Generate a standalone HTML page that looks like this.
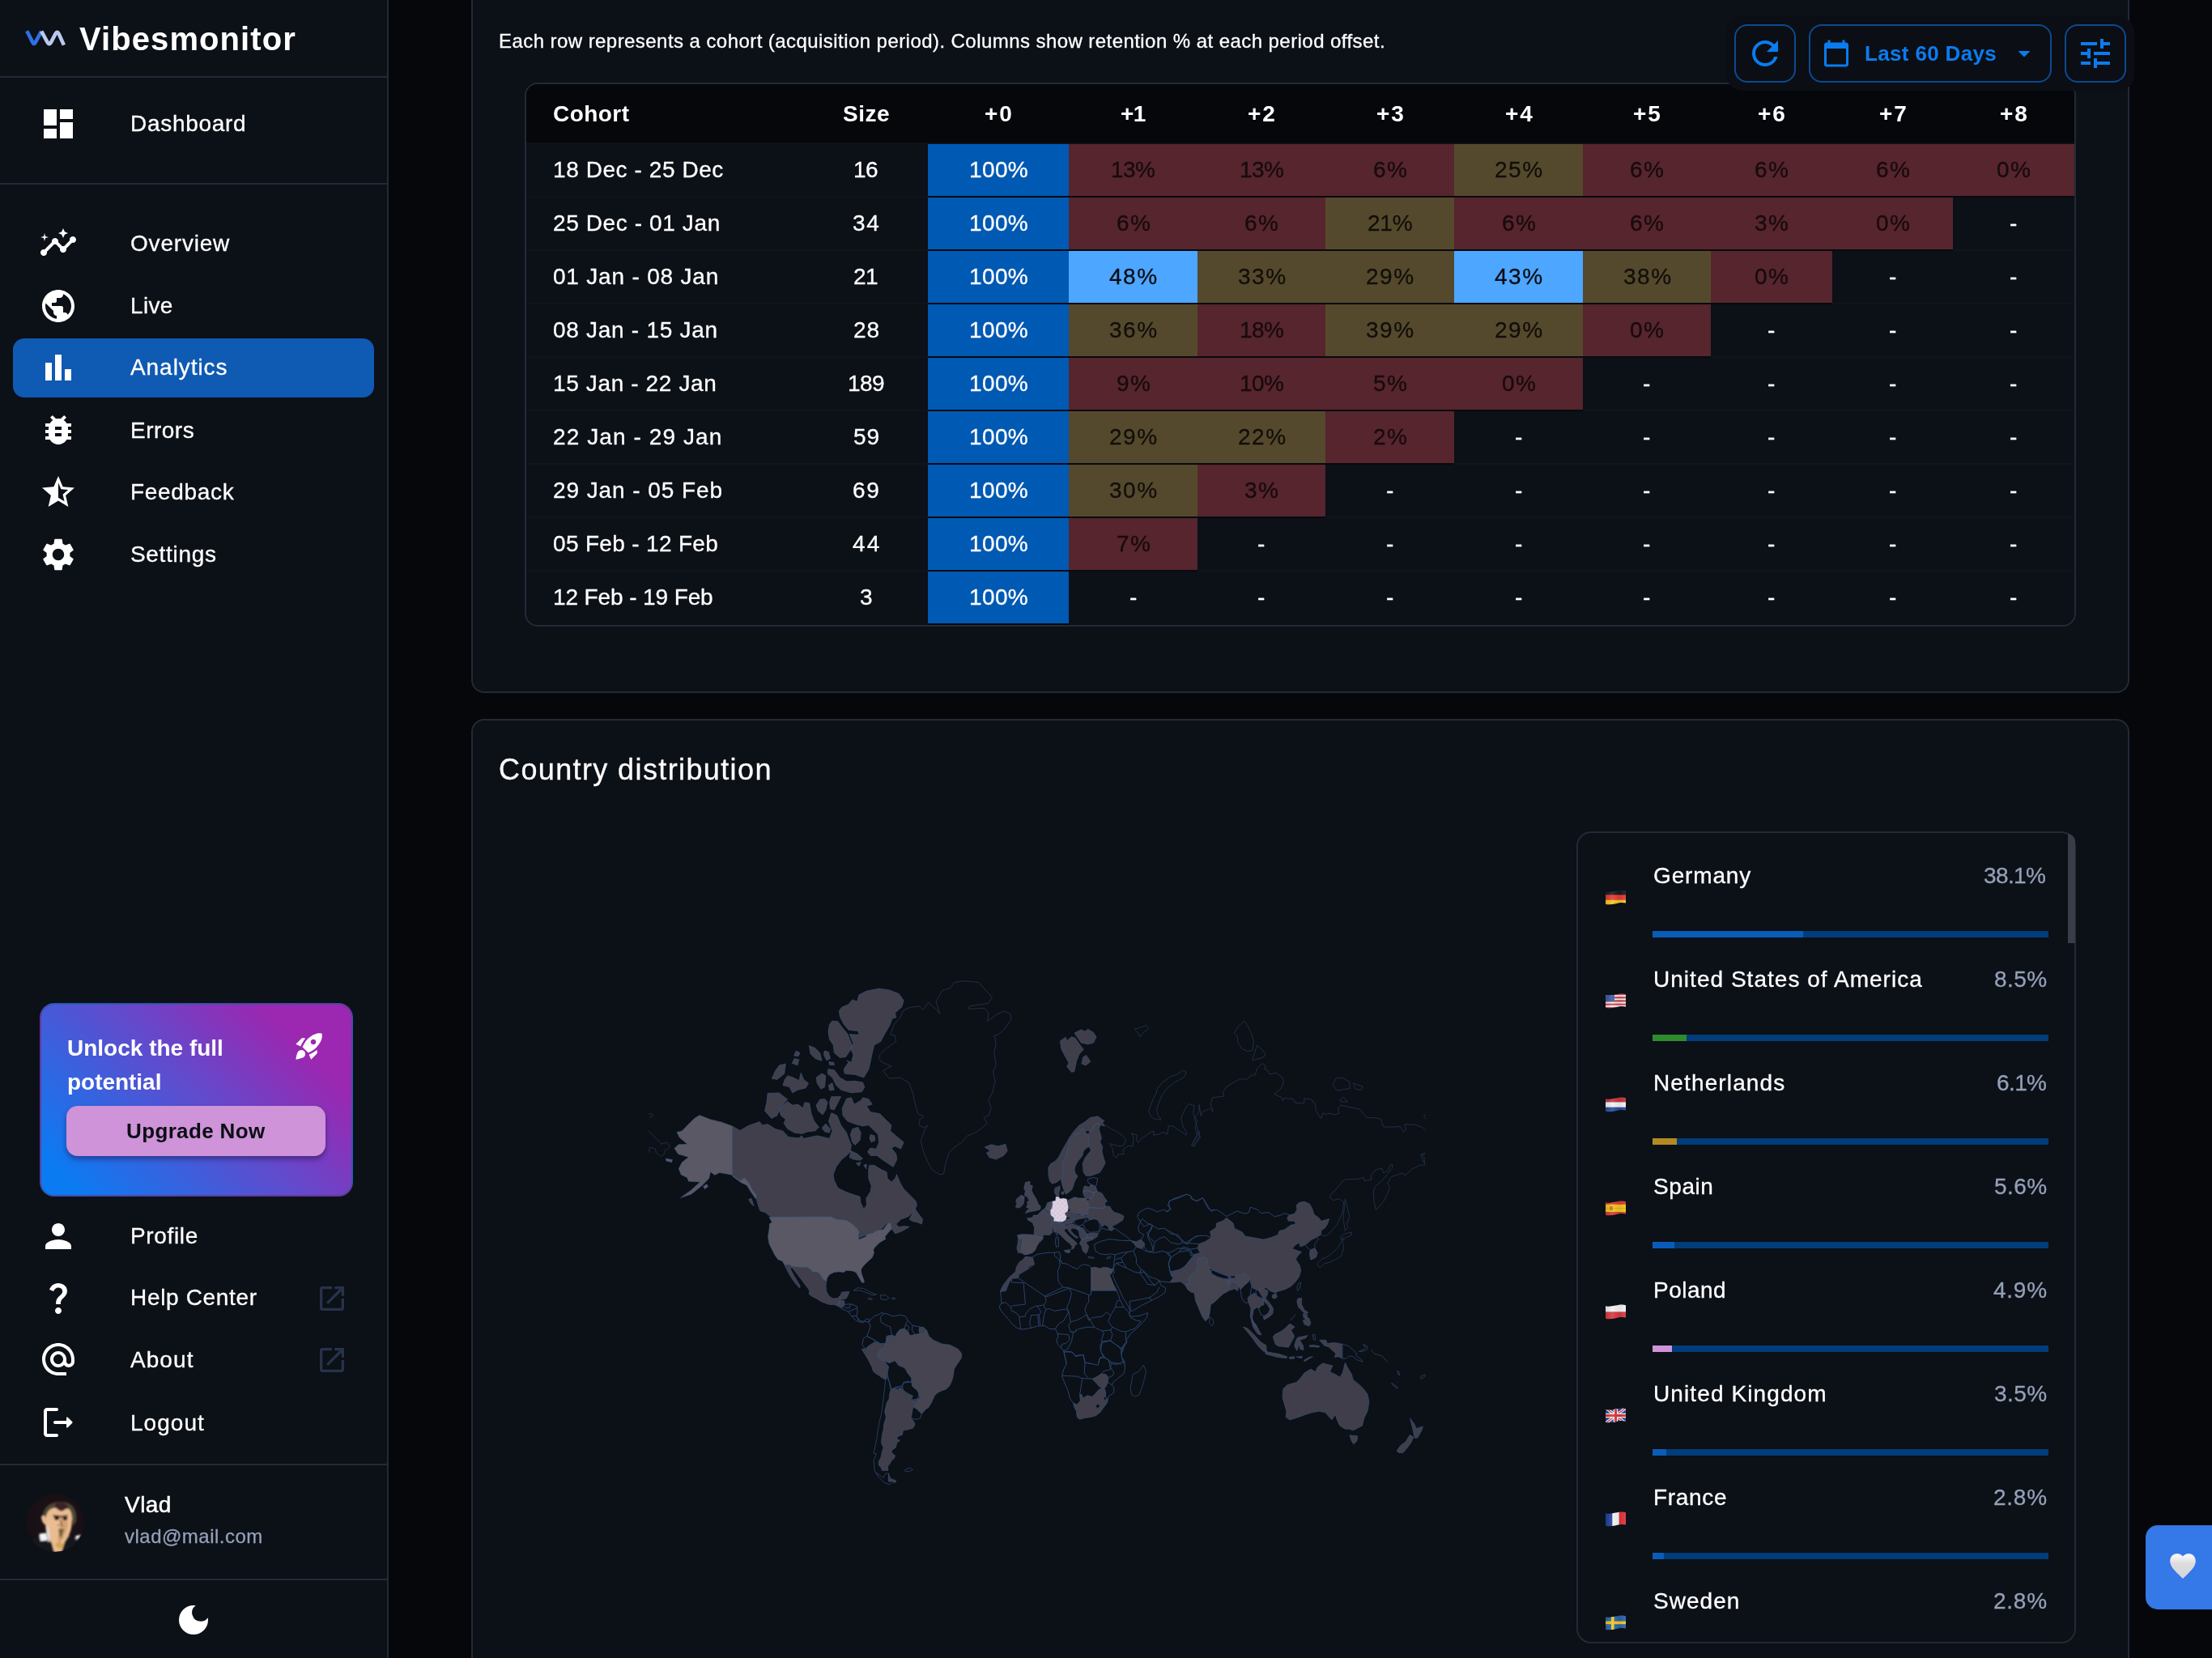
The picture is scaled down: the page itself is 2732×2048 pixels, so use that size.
<!DOCTYPE html>
<html><head><meta charset="utf-8"><title>Vibesmonitor</title>
<style>
html,body{margin:0;padding:0;background:#05070a;}
body{width:2732px;height:2048px;position:relative;overflow:hidden;font-family:"Liberation Sans",sans-serif;}
.b,.t,.ic{position:absolute;}
.t{white-space:nowrap;will-change:transform;}
</style></head><body>
<svg width="0" height="0" style="position:absolute"><defs><linearGradient id="fsh" x1="0" x2="1" y1="0" y2="0"><stop offset="0" stop-color="#000" stop-opacity=".12"/><stop offset=".35" stop-color="#fff" stop-opacity=".10"/><stop offset=".7" stop-color="#000" stop-opacity=".06"/><stop offset="1" stop-color="#fff" stop-opacity=".08"/></linearGradient></defs></svg>
<div class="b" style="left:582px;top:-40px;width:2048px;height:896px;background:#0c1017;border:2px solid #222a38;border-radius:16px;box-sizing:border-box;"></div>
<div class="b" style="left:582px;top:888px;width:2048px;height:1300px;background:#0c1017;border:2px solid #222a38;border-radius:16px;box-sizing:border-box;"></div>
<div class="t" style="left:616.00px;top:39.08px;font-size:24px;line-height:24px;color:#fff;letter-spacing:0.438px;-webkit-text-stroke-width:0.3px;">Each row represents a cohort (acquisition period). Columns show retention % at each period offset.</div>
<div class="b" style="left:648px;top:102px;width:1916px;height:672px;border:2px solid #222a38;border-radius:16px;box-sizing:border-box;overflow:hidden;"></div>
<div class="b" style="left:650px;top:104px;width:1912px;height:72px;background:#05070a;border-radius:14px 14px 0 0;"></div>
<div class="t" style="left:682.50px;top:126.80px;font-size:28px;line-height:28px;color:#fff;font-weight:700;letter-spacing:0.450px;">Cohort</div>
<div class="t" style="left:1041.05px;top:126.80px;font-size:28px;line-height:28px;color:#fff;font-weight:700;letter-spacing:0.500px;">Size</div>
<div class="t" style="left:1216.00px;top:126.80px;font-size:28px;line-height:28px;color:#fff;font-weight:700;letter-spacing:2.000px;">+0</div>
<div class="t" style="left:1383.80px;top:126.80px;font-size:28px;line-height:28px;color:#fff;font-weight:700;letter-spacing:-0.600px;">+1</div>
<div class="t" style="left:1541.00px;top:126.80px;font-size:28px;line-height:28px;color:#fff;font-weight:700;letter-spacing:2.000px;">+2</div>
<div class="t" style="left:1699.50px;top:126.80px;font-size:28px;line-height:28px;color:#fff;font-weight:700;letter-spacing:2.000px;">+3</div>
<div class="t" style="left:1858.50px;top:126.80px;font-size:28px;line-height:28px;color:#fff;font-weight:700;letter-spacing:2.000px;">+4</div>
<div class="t" style="left:2017.00px;top:126.80px;font-size:28px;line-height:28px;color:#fff;font-weight:700;letter-spacing:2.000px;">+5</div>
<div class="t" style="left:2171.00px;top:126.80px;font-size:28px;line-height:28px;color:#fff;font-weight:700;letter-spacing:2.000px;">+6</div>
<div class="t" style="left:2320.50px;top:126.80px;font-size:28px;line-height:28px;color:#fff;font-weight:700;letter-spacing:2.000px;">+7</div>
<div class="t" style="left:2470.00px;top:126.80px;font-size:28px;line-height:28px;color:#fff;font-weight:700;letter-spacing:2.000px;">+8</div>
<div class="b" style="left:650px;top:242px;width:496px;height:2px;background:#10141c;"></div>
<div class="t" style="left:682.50px;top:196.40px;font-size:28px;line-height:28px;color:#fff;letter-spacing:0.575px;-webkit-text-stroke-width:0.3px;">18 Dec - 25 Dec</div>
<div class="t" style="left:1054.47px;top:196.40px;font-size:28px;line-height:28px;color:#fff;letter-spacing:-0.600px;-webkit-text-stroke-width:0.3px;">16</div>
<div class="b" style="left:1146px;top:178px;width:174px;height:64px;background:#0059b3;"></div>
<div class="b" style="left:1146px;top:242px;width:174px;height:2px;background:#080a0f;"></div>
<div class="t" style="left:1196.70px;top:196.40px;font-size:28px;line-height:28px;color:#fff;letter-spacing:0.367px;-webkit-text-stroke-width:0.3px;">100%</div>
<div class="b" style="left:1320px;top:178px;width:159px;height:64px;background:#56252d;"></div>
<div class="b" style="left:1320px;top:242px;width:159px;height:2px;background:#080a0f;"></div>
<div class="t" style="left:1372.10px;top:196.40px;font-size:28px;line-height:28px;color:#170b0d;letter-spacing:-0.600px;-webkit-text-stroke-width:0.3px;">13%</div>
<div class="b" style="left:1479px;top:178px;width:158px;height:64px;background:#56252d;"></div>
<div class="b" style="left:1479px;top:242px;width:158px;height:2px;background:#080a0f;"></div>
<div class="t" style="left:1530.60px;top:196.40px;font-size:28px;line-height:28px;color:#170b0d;letter-spacing:-0.600px;-webkit-text-stroke-width:0.3px;">13%</div>
<div class="b" style="left:1637px;top:178px;width:159px;height:64px;background:#56252d;"></div>
<div class="b" style="left:1637px;top:242px;width:159px;height:2px;background:#080a0f;"></div>
<div class="t" style="left:1695.50px;top:196.40px;font-size:28px;line-height:28px;color:#170b0d;letter-spacing:1.500px;-webkit-text-stroke-width:0.3px;">6%</div>
<div class="b" style="left:1796px;top:178px;width:159px;height:64px;background:#55492d;"></div>
<div class="b" style="left:1796px;top:242px;width:159px;height:2px;background:#080a0f;"></div>
<div class="t" style="left:1846.00px;top:196.40px;font-size:28px;line-height:28px;color:#120f0a;letter-spacing:1.500px;-webkit-text-stroke-width:0.3px;">25%</div>
<div class="b" style="left:1955px;top:178px;width:158px;height:64px;background:#56252d;"></div>
<div class="b" style="left:1955px;top:242px;width:158px;height:2px;background:#080a0f;"></div>
<div class="t" style="left:2013.00px;top:196.40px;font-size:28px;line-height:28px;color:#170b0d;letter-spacing:1.500px;-webkit-text-stroke-width:0.3px;">6%</div>
<div class="b" style="left:2113px;top:178px;width:150px;height:64px;background:#56252d;"></div>
<div class="b" style="left:2113px;top:242px;width:150px;height:2px;background:#080a0f;"></div>
<div class="t" style="left:2167.00px;top:196.40px;font-size:28px;line-height:28px;color:#170b0d;letter-spacing:1.500px;-webkit-text-stroke-width:0.3px;">6%</div>
<div class="b" style="left:2263px;top:178px;width:149px;height:64px;background:#56252d;"></div>
<div class="b" style="left:2263px;top:242px;width:149px;height:2px;background:#080a0f;"></div>
<div class="t" style="left:2316.50px;top:196.40px;font-size:28px;line-height:28px;color:#170b0d;letter-spacing:1.500px;-webkit-text-stroke-width:0.3px;">6%</div>
<div class="b" style="left:2412px;top:178px;width:150px;height:64px;background:#56252d;"></div>
<div class="b" style="left:2412px;top:242px;width:150px;height:2px;background:#080a0f;"></div>
<div class="t" style="left:2466.00px;top:196.40px;font-size:28px;line-height:28px;color:#170b0d;letter-spacing:1.500px;-webkit-text-stroke-width:0.3px;">0%</div>
<div class="b" style="left:650px;top:308px;width:496px;height:2px;background:#10141c;"></div>
<div class="t" style="left:682.50px;top:262.40px;font-size:28px;line-height:28px;color:#fff;letter-spacing:0.611px;-webkit-text-stroke-width:0.3px;">25 Dec - 01 Jan</div>
<div class="t" style="left:1053.30px;top:262.40px;font-size:28px;line-height:28px;color:#fff;letter-spacing:1.750px;-webkit-text-stroke-width:0.3px;">34</div>
<div class="b" style="left:1146px;top:244px;width:174px;height:64px;background:#0059b3;"></div>
<div class="b" style="left:1146px;top:308px;width:174px;height:2px;background:#080a0f;"></div>
<div class="t" style="left:1196.70px;top:262.40px;font-size:28px;line-height:28px;color:#fff;letter-spacing:0.367px;-webkit-text-stroke-width:0.3px;">100%</div>
<div class="b" style="left:1320px;top:244px;width:159px;height:64px;background:#56252d;"></div>
<div class="b" style="left:1320px;top:308px;width:159px;height:2px;background:#080a0f;"></div>
<div class="t" style="left:1378.50px;top:262.40px;font-size:28px;line-height:28px;color:#170b0d;letter-spacing:1.500px;-webkit-text-stroke-width:0.3px;">6%</div>
<div class="b" style="left:1479px;top:244px;width:158px;height:64px;background:#56252d;"></div>
<div class="b" style="left:1479px;top:308px;width:158px;height:2px;background:#080a0f;"></div>
<div class="t" style="left:1537.00px;top:262.40px;font-size:28px;line-height:28px;color:#170b0d;letter-spacing:1.500px;-webkit-text-stroke-width:0.3px;">6%</div>
<div class="b" style="left:1637px;top:244px;width:159px;height:64px;background:#55492d;"></div>
<div class="b" style="left:1637px;top:308px;width:159px;height:2px;background:#080a0f;"></div>
<div class="t" style="left:1688.75px;top:262.40px;font-size:28px;line-height:28px;color:#120f0a;letter-spacing:-0.250px;-webkit-text-stroke-width:0.3px;">21%</div>
<div class="b" style="left:1796px;top:244px;width:159px;height:64px;background:#56252d;"></div>
<div class="b" style="left:1796px;top:308px;width:159px;height:2px;background:#080a0f;"></div>
<div class="t" style="left:1854.50px;top:262.40px;font-size:28px;line-height:28px;color:#170b0d;letter-spacing:1.500px;-webkit-text-stroke-width:0.3px;">6%</div>
<div class="b" style="left:1955px;top:244px;width:158px;height:64px;background:#56252d;"></div>
<div class="b" style="left:1955px;top:308px;width:158px;height:2px;background:#080a0f;"></div>
<div class="t" style="left:2013.00px;top:262.40px;font-size:28px;line-height:28px;color:#170b0d;letter-spacing:1.500px;-webkit-text-stroke-width:0.3px;">6%</div>
<div class="b" style="left:2113px;top:244px;width:150px;height:64px;background:#56252d;"></div>
<div class="b" style="left:2113px;top:308px;width:150px;height:2px;background:#080a0f;"></div>
<div class="t" style="left:2167.00px;top:262.40px;font-size:28px;line-height:28px;color:#170b0d;letter-spacing:1.500px;-webkit-text-stroke-width:0.3px;">3%</div>
<div class="b" style="left:2263px;top:244px;width:149px;height:64px;background:#56252d;"></div>
<div class="b" style="left:2263px;top:308px;width:149px;height:2px;background:#080a0f;"></div>
<div class="t" style="left:2316.50px;top:262.40px;font-size:28px;line-height:28px;color:#170b0d;letter-spacing:1.500px;-webkit-text-stroke-width:0.3px;">0%</div>
<div class="b" style="left:2412px;top:308px;width:150px;height:2px;background:#10141c;"></div>
<div class="t" style="left:2482.38px;top:262.40px;font-size:28px;line-height:28px;color:#fff;-webkit-text-stroke-width:0.3px;">-</div>
<div class="b" style="left:650px;top:374px;width:496px;height:2px;background:#10141c;"></div>
<div class="t" style="left:682.50px;top:328.40px;font-size:28px;line-height:28px;color:#fff;letter-spacing:0.800px;-webkit-text-stroke-width:0.3px;">01 Jan - 08 Jan</div>
<div class="t" style="left:1054.47px;top:328.40px;font-size:28px;line-height:28px;color:#fff;letter-spacing:-0.600px;-webkit-text-stroke-width:0.3px;">21</div>
<div class="b" style="left:1146px;top:310px;width:174px;height:64px;background:#0059b3;"></div>
<div class="b" style="left:1146px;top:374px;width:174px;height:2px;background:#080a0f;"></div>
<div class="t" style="left:1196.70px;top:328.40px;font-size:28px;line-height:28px;color:#fff;letter-spacing:0.367px;-webkit-text-stroke-width:0.3px;">100%</div>
<div class="b" style="left:1320px;top:310px;width:159px;height:64px;background:#4da6ff;"></div>
<div class="b" style="left:1320px;top:374px;width:159px;height:2px;background:#080a0f;"></div>
<div class="t" style="left:1370.00px;top:328.40px;font-size:28px;line-height:28px;color:#0b0d12;letter-spacing:1.500px;-webkit-text-stroke-width:0.3px;">48%</div>
<div class="b" style="left:1479px;top:310px;width:158px;height:64px;background:#55492d;"></div>
<div class="b" style="left:1479px;top:374px;width:158px;height:2px;background:#080a0f;"></div>
<div class="t" style="left:1528.50px;top:328.40px;font-size:28px;line-height:28px;color:#120f0a;letter-spacing:1.500px;-webkit-text-stroke-width:0.3px;">33%</div>
<div class="b" style="left:1637px;top:310px;width:159px;height:64px;background:#55492d;"></div>
<div class="b" style="left:1637px;top:374px;width:159px;height:2px;background:#080a0f;"></div>
<div class="t" style="left:1687.00px;top:328.40px;font-size:28px;line-height:28px;color:#120f0a;letter-spacing:1.500px;-webkit-text-stroke-width:0.3px;">29%</div>
<div class="b" style="left:1796px;top:310px;width:159px;height:64px;background:#4da6ff;"></div>
<div class="b" style="left:1796px;top:374px;width:159px;height:2px;background:#080a0f;"></div>
<div class="t" style="left:1846.00px;top:328.40px;font-size:28px;line-height:28px;color:#0b0d12;letter-spacing:1.500px;-webkit-text-stroke-width:0.3px;">43%</div>
<div class="b" style="left:1955px;top:310px;width:158px;height:64px;background:#55492d;"></div>
<div class="b" style="left:1955px;top:374px;width:158px;height:2px;background:#080a0f;"></div>
<div class="t" style="left:2004.50px;top:328.40px;font-size:28px;line-height:28px;color:#120f0a;letter-spacing:1.500px;-webkit-text-stroke-width:0.3px;">38%</div>
<div class="b" style="left:2113px;top:310px;width:150px;height:64px;background:#56252d;"></div>
<div class="b" style="left:2113px;top:374px;width:150px;height:2px;background:#080a0f;"></div>
<div class="t" style="left:2167.00px;top:328.40px;font-size:28px;line-height:28px;color:#170b0d;letter-spacing:1.500px;-webkit-text-stroke-width:0.3px;">0%</div>
<div class="b" style="left:2263px;top:374px;width:149px;height:2px;background:#10141c;"></div>
<div class="t" style="left:2332.88px;top:328.40px;font-size:28px;line-height:28px;color:#fff;-webkit-text-stroke-width:0.3px;">-</div>
<div class="b" style="left:2412px;top:374px;width:150px;height:2px;background:#10141c;"></div>
<div class="t" style="left:2482.38px;top:328.40px;font-size:28px;line-height:28px;color:#fff;-webkit-text-stroke-width:0.3px;">-</div>
<div class="b" style="left:650px;top:440px;width:496px;height:2px;background:#10141c;"></div>
<div class="t" style="left:682.50px;top:394.40px;font-size:28px;line-height:28px;color:#fff;letter-spacing:0.714px;-webkit-text-stroke-width:0.3px;">08 Jan - 15 Jan</div>
<div class="t" style="left:1053.75px;top:394.40px;font-size:28px;line-height:28px;color:#fff;letter-spacing:0.850px;-webkit-text-stroke-width:0.3px;">28</div>
<div class="b" style="left:1146px;top:376px;width:174px;height:64px;background:#0059b3;"></div>
<div class="b" style="left:1146px;top:440px;width:174px;height:2px;background:#080a0f;"></div>
<div class="t" style="left:1196.70px;top:394.40px;font-size:28px;line-height:28px;color:#fff;letter-spacing:0.367px;-webkit-text-stroke-width:0.3px;">100%</div>
<div class="b" style="left:1320px;top:376px;width:159px;height:64px;background:#55492d;"></div>
<div class="b" style="left:1320px;top:440px;width:159px;height:2px;background:#080a0f;"></div>
<div class="t" style="left:1370.00px;top:394.40px;font-size:28px;line-height:28px;color:#120f0a;letter-spacing:1.500px;-webkit-text-stroke-width:0.3px;">36%</div>
<div class="b" style="left:1479px;top:376px;width:158px;height:64px;background:#56252d;"></div>
<div class="b" style="left:1479px;top:440px;width:158px;height:2px;background:#080a0f;"></div>
<div class="t" style="left:1530.60px;top:394.40px;font-size:28px;line-height:28px;color:#170b0d;letter-spacing:-0.600px;-webkit-text-stroke-width:0.3px;">18%</div>
<div class="b" style="left:1637px;top:376px;width:159px;height:64px;background:#55492d;"></div>
<div class="b" style="left:1637px;top:440px;width:159px;height:2px;background:#080a0f;"></div>
<div class="t" style="left:1687.00px;top:394.40px;font-size:28px;line-height:28px;color:#120f0a;letter-spacing:1.500px;-webkit-text-stroke-width:0.3px;">39%</div>
<div class="b" style="left:1796px;top:376px;width:159px;height:64px;background:#55492d;"></div>
<div class="b" style="left:1796px;top:440px;width:159px;height:2px;background:#080a0f;"></div>
<div class="t" style="left:1846.00px;top:394.40px;font-size:28px;line-height:28px;color:#120f0a;letter-spacing:1.500px;-webkit-text-stroke-width:0.3px;">29%</div>
<div class="b" style="left:1955px;top:376px;width:158px;height:64px;background:#56252d;"></div>
<div class="b" style="left:1955px;top:440px;width:158px;height:2px;background:#080a0f;"></div>
<div class="t" style="left:2013.00px;top:394.40px;font-size:28px;line-height:28px;color:#170b0d;letter-spacing:1.500px;-webkit-text-stroke-width:0.3px;">0%</div>
<div class="b" style="left:2113px;top:440px;width:150px;height:2px;background:#10141c;"></div>
<div class="t" style="left:2183.38px;top:394.40px;font-size:28px;line-height:28px;color:#fff;-webkit-text-stroke-width:0.3px;">-</div>
<div class="b" style="left:2263px;top:440px;width:149px;height:2px;background:#10141c;"></div>
<div class="t" style="left:2332.88px;top:394.40px;font-size:28px;line-height:28px;color:#fff;-webkit-text-stroke-width:0.3px;">-</div>
<div class="b" style="left:2412px;top:440px;width:150px;height:2px;background:#10141c;"></div>
<div class="t" style="left:2482.38px;top:394.40px;font-size:28px;line-height:28px;color:#fff;-webkit-text-stroke-width:0.3px;">-</div>
<div class="b" style="left:650px;top:506px;width:496px;height:2px;background:#10141c;"></div>
<div class="t" style="left:682.50px;top:460.40px;font-size:28px;line-height:28px;color:#fff;letter-spacing:0.629px;-webkit-text-stroke-width:0.3px;">15 Jan - 22 Jan</div>
<div class="t" style="left:1047.02px;top:460.40px;font-size:28px;line-height:28px;color:#fff;letter-spacing:-0.600px;-webkit-text-stroke-width:0.3px;">189</div>
<div class="b" style="left:1146px;top:442px;width:174px;height:64px;background:#0059b3;"></div>
<div class="b" style="left:1146px;top:506px;width:174px;height:2px;background:#080a0f;"></div>
<div class="t" style="left:1196.70px;top:460.40px;font-size:28px;line-height:28px;color:#fff;letter-spacing:0.367px;-webkit-text-stroke-width:0.3px;">100%</div>
<div class="b" style="left:1320px;top:442px;width:159px;height:64px;background:#56252d;"></div>
<div class="b" style="left:1320px;top:506px;width:159px;height:2px;background:#080a0f;"></div>
<div class="t" style="left:1378.50px;top:460.40px;font-size:28px;line-height:28px;color:#170b0d;letter-spacing:1.500px;-webkit-text-stroke-width:0.3px;">9%</div>
<div class="b" style="left:1479px;top:442px;width:158px;height:64px;background:#56252d;"></div>
<div class="b" style="left:1479px;top:506px;width:158px;height:2px;background:#080a0f;"></div>
<div class="t" style="left:1530.60px;top:460.40px;font-size:28px;line-height:28px;color:#170b0d;letter-spacing:-0.600px;-webkit-text-stroke-width:0.3px;">10%</div>
<div class="b" style="left:1637px;top:442px;width:159px;height:64px;background:#56252d;"></div>
<div class="b" style="left:1637px;top:506px;width:159px;height:2px;background:#080a0f;"></div>
<div class="t" style="left:1695.50px;top:460.40px;font-size:28px;line-height:28px;color:#170b0d;letter-spacing:1.500px;-webkit-text-stroke-width:0.3px;">5%</div>
<div class="b" style="left:1796px;top:442px;width:159px;height:64px;background:#56252d;"></div>
<div class="b" style="left:1796px;top:506px;width:159px;height:2px;background:#080a0f;"></div>
<div class="t" style="left:1854.50px;top:460.40px;font-size:28px;line-height:28px;color:#170b0d;letter-spacing:1.500px;-webkit-text-stroke-width:0.3px;">0%</div>
<div class="b" style="left:1955px;top:506px;width:158px;height:2px;background:#10141c;"></div>
<div class="t" style="left:2029.38px;top:460.40px;font-size:28px;line-height:28px;color:#fff;-webkit-text-stroke-width:0.3px;">-</div>
<div class="b" style="left:2113px;top:506px;width:150px;height:2px;background:#10141c;"></div>
<div class="t" style="left:2183.38px;top:460.40px;font-size:28px;line-height:28px;color:#fff;-webkit-text-stroke-width:0.3px;">-</div>
<div class="b" style="left:2263px;top:506px;width:149px;height:2px;background:#10141c;"></div>
<div class="t" style="left:2332.88px;top:460.40px;font-size:28px;line-height:28px;color:#fff;-webkit-text-stroke-width:0.3px;">-</div>
<div class="b" style="left:2412px;top:506px;width:150px;height:2px;background:#10141c;"></div>
<div class="t" style="left:2482.38px;top:460.40px;font-size:28px;line-height:28px;color:#fff;-webkit-text-stroke-width:0.3px;">-</div>
<div class="b" style="left:650px;top:572px;width:496px;height:2px;background:#10141c;"></div>
<div class="t" style="left:682.50px;top:526.40px;font-size:28px;line-height:28px;color:#fff;letter-spacing:1.093px;-webkit-text-stroke-width:0.3px;">22 Jan - 29 Jan</div>
<div class="t" style="left:1053.75px;top:526.40px;font-size:28px;line-height:28px;color:#fff;letter-spacing:0.850px;-webkit-text-stroke-width:0.3px;">59</div>
<div class="b" style="left:1146px;top:508px;width:174px;height:64px;background:#0059b3;"></div>
<div class="b" style="left:1146px;top:572px;width:174px;height:2px;background:#080a0f;"></div>
<div class="t" style="left:1196.70px;top:526.40px;font-size:28px;line-height:28px;color:#fff;letter-spacing:0.367px;-webkit-text-stroke-width:0.3px;">100%</div>
<div class="b" style="left:1320px;top:508px;width:159px;height:64px;background:#55492d;"></div>
<div class="b" style="left:1320px;top:572px;width:159px;height:2px;background:#080a0f;"></div>
<div class="t" style="left:1370.00px;top:526.40px;font-size:28px;line-height:28px;color:#120f0a;letter-spacing:1.500px;-webkit-text-stroke-width:0.3px;">29%</div>
<div class="b" style="left:1479px;top:508px;width:158px;height:64px;background:#55492d;"></div>
<div class="b" style="left:1479px;top:572px;width:158px;height:2px;background:#080a0f;"></div>
<div class="t" style="left:1528.50px;top:526.40px;font-size:28px;line-height:28px;color:#120f0a;letter-spacing:1.500px;-webkit-text-stroke-width:0.3px;">22%</div>
<div class="b" style="left:1637px;top:508px;width:159px;height:64px;background:#56252d;"></div>
<div class="b" style="left:1637px;top:572px;width:159px;height:2px;background:#080a0f;"></div>
<div class="t" style="left:1695.50px;top:526.40px;font-size:28px;line-height:28px;color:#170b0d;letter-spacing:1.500px;-webkit-text-stroke-width:0.3px;">2%</div>
<div class="b" style="left:1796px;top:572px;width:159px;height:2px;background:#10141c;"></div>
<div class="t" style="left:1870.88px;top:526.40px;font-size:28px;line-height:28px;color:#fff;-webkit-text-stroke-width:0.3px;">-</div>
<div class="b" style="left:1955px;top:572px;width:158px;height:2px;background:#10141c;"></div>
<div class="t" style="left:2029.38px;top:526.40px;font-size:28px;line-height:28px;color:#fff;-webkit-text-stroke-width:0.3px;">-</div>
<div class="b" style="left:2113px;top:572px;width:150px;height:2px;background:#10141c;"></div>
<div class="t" style="left:2183.38px;top:526.40px;font-size:28px;line-height:28px;color:#fff;-webkit-text-stroke-width:0.3px;">-</div>
<div class="b" style="left:2263px;top:572px;width:149px;height:2px;background:#10141c;"></div>
<div class="t" style="left:2332.88px;top:526.40px;font-size:28px;line-height:28px;color:#fff;-webkit-text-stroke-width:0.3px;">-</div>
<div class="b" style="left:2412px;top:572px;width:150px;height:2px;background:#10141c;"></div>
<div class="t" style="left:2482.38px;top:526.40px;font-size:28px;line-height:28px;color:#fff;-webkit-text-stroke-width:0.3px;">-</div>
<div class="b" style="left:650px;top:638px;width:496px;height:2px;background:#10141c;"></div>
<div class="t" style="left:682.50px;top:592.40px;font-size:28px;line-height:28px;color:#fff;letter-spacing:0.918px;-webkit-text-stroke-width:0.3px;">29 Jan - 05 Feb</div>
<div class="t" style="left:1053.30px;top:592.40px;font-size:28px;line-height:28px;color:#fff;letter-spacing:1.750px;-webkit-text-stroke-width:0.3px;">69</div>
<div class="b" style="left:1146px;top:574px;width:174px;height:64px;background:#0059b3;"></div>
<div class="b" style="left:1146px;top:638px;width:174px;height:2px;background:#080a0f;"></div>
<div class="t" style="left:1196.70px;top:592.40px;font-size:28px;line-height:28px;color:#fff;letter-spacing:0.367px;-webkit-text-stroke-width:0.3px;">100%</div>
<div class="b" style="left:1320px;top:574px;width:159px;height:64px;background:#55492d;"></div>
<div class="b" style="left:1320px;top:638px;width:159px;height:2px;background:#080a0f;"></div>
<div class="t" style="left:1370.00px;top:592.40px;font-size:28px;line-height:28px;color:#120f0a;letter-spacing:1.500px;-webkit-text-stroke-width:0.3px;">30%</div>
<div class="b" style="left:1479px;top:574px;width:158px;height:64px;background:#56252d;"></div>
<div class="b" style="left:1479px;top:638px;width:158px;height:2px;background:#080a0f;"></div>
<div class="t" style="left:1537.00px;top:592.40px;font-size:28px;line-height:28px;color:#170b0d;letter-spacing:1.500px;-webkit-text-stroke-width:0.3px;">3%</div>
<div class="b" style="left:1637px;top:638px;width:159px;height:2px;background:#10141c;"></div>
<div class="t" style="left:1711.88px;top:592.40px;font-size:28px;line-height:28px;color:#fff;-webkit-text-stroke-width:0.3px;">-</div>
<div class="b" style="left:1796px;top:638px;width:159px;height:2px;background:#10141c;"></div>
<div class="t" style="left:1870.88px;top:592.40px;font-size:28px;line-height:28px;color:#fff;-webkit-text-stroke-width:0.3px;">-</div>
<div class="b" style="left:1955px;top:638px;width:158px;height:2px;background:#10141c;"></div>
<div class="t" style="left:2029.38px;top:592.40px;font-size:28px;line-height:28px;color:#fff;-webkit-text-stroke-width:0.3px;">-</div>
<div class="b" style="left:2113px;top:638px;width:150px;height:2px;background:#10141c;"></div>
<div class="t" style="left:2183.38px;top:592.40px;font-size:28px;line-height:28px;color:#fff;-webkit-text-stroke-width:0.3px;">-</div>
<div class="b" style="left:2263px;top:638px;width:149px;height:2px;background:#10141c;"></div>
<div class="t" style="left:2332.88px;top:592.40px;font-size:28px;line-height:28px;color:#fff;-webkit-text-stroke-width:0.3px;">-</div>
<div class="b" style="left:2412px;top:638px;width:150px;height:2px;background:#10141c;"></div>
<div class="t" style="left:2482.38px;top:592.40px;font-size:28px;line-height:28px;color:#fff;-webkit-text-stroke-width:0.3px;">-</div>
<div class="b" style="left:650px;top:704px;width:496px;height:2px;background:#10141c;"></div>
<div class="t" style="left:682.50px;top:658.40px;font-size:28px;line-height:28px;color:#fff;letter-spacing:0.325px;-webkit-text-stroke-width:0.3px;">05 Feb - 12 Feb</div>
<div class="t" style="left:1053.05px;top:658.40px;font-size:28px;line-height:28px;color:#fff;letter-spacing:2.250px;-webkit-text-stroke-width:0.3px;">44</div>
<div class="b" style="left:1146px;top:640px;width:174px;height:64px;background:#0059b3;"></div>
<div class="b" style="left:1146px;top:704px;width:174px;height:2px;background:#080a0f;"></div>
<div class="t" style="left:1196.70px;top:658.40px;font-size:28px;line-height:28px;color:#fff;letter-spacing:0.367px;-webkit-text-stroke-width:0.3px;">100%</div>
<div class="b" style="left:1320px;top:640px;width:159px;height:64px;background:#56252d;"></div>
<div class="b" style="left:1320px;top:704px;width:159px;height:2px;background:#080a0f;"></div>
<div class="t" style="left:1378.50px;top:658.40px;font-size:28px;line-height:28px;color:#170b0d;letter-spacing:1.500px;-webkit-text-stroke-width:0.3px;">7%</div>
<div class="b" style="left:1479px;top:704px;width:158px;height:2px;background:#10141c;"></div>
<div class="t" style="left:1553.38px;top:658.40px;font-size:28px;line-height:28px;color:#fff;-webkit-text-stroke-width:0.3px;">-</div>
<div class="b" style="left:1637px;top:704px;width:159px;height:2px;background:#10141c;"></div>
<div class="t" style="left:1711.88px;top:658.40px;font-size:28px;line-height:28px;color:#fff;-webkit-text-stroke-width:0.3px;">-</div>
<div class="b" style="left:1796px;top:704px;width:159px;height:2px;background:#10141c;"></div>
<div class="t" style="left:1870.88px;top:658.40px;font-size:28px;line-height:28px;color:#fff;-webkit-text-stroke-width:0.3px;">-</div>
<div class="b" style="left:1955px;top:704px;width:158px;height:2px;background:#10141c;"></div>
<div class="t" style="left:2029.38px;top:658.40px;font-size:28px;line-height:28px;color:#fff;-webkit-text-stroke-width:0.3px;">-</div>
<div class="b" style="left:2113px;top:704px;width:150px;height:2px;background:#10141c;"></div>
<div class="t" style="left:2183.38px;top:658.40px;font-size:28px;line-height:28px;color:#fff;-webkit-text-stroke-width:0.3px;">-</div>
<div class="b" style="left:2263px;top:704px;width:149px;height:2px;background:#10141c;"></div>
<div class="t" style="left:2332.88px;top:658.40px;font-size:28px;line-height:28px;color:#fff;-webkit-text-stroke-width:0.3px;">-</div>
<div class="b" style="left:2412px;top:704px;width:150px;height:2px;background:#10141c;"></div>
<div class="t" style="left:2482.38px;top:658.40px;font-size:28px;line-height:28px;color:#fff;-webkit-text-stroke-width:0.3px;">-</div>
<div class="t" style="left:682.50px;top:724.40px;font-size:28px;line-height:28px;color:#fff;letter-spacing:-0.111px;-webkit-text-stroke-width:0.3px;">12 Feb - 19 Feb</div>
<div class="t" style="left:1062.05px;top:724.40px;font-size:28px;line-height:28px;color:#fff;-webkit-text-stroke-width:0.3px;">3</div>
<div class="b" style="left:1146px;top:706px;width:174px;height:64px;background:#0059b3;"></div>
<div class="b" style="left:1146px;top:770px;width:174px;height:2px;background:#080a0f;"></div>
<div class="t" style="left:1196.70px;top:724.40px;font-size:28px;line-height:28px;color:#fff;letter-spacing:0.367px;-webkit-text-stroke-width:0.3px;">100%</div>
<div class="t" style="left:1394.88px;top:724.40px;font-size:28px;line-height:28px;color:#fff;-webkit-text-stroke-width:0.3px;">-</div>
<div class="t" style="left:1553.38px;top:724.40px;font-size:28px;line-height:28px;color:#fff;-webkit-text-stroke-width:0.3px;">-</div>
<div class="t" style="left:1711.88px;top:724.40px;font-size:28px;line-height:28px;color:#fff;-webkit-text-stroke-width:0.3px;">-</div>
<div class="t" style="left:1870.88px;top:724.40px;font-size:28px;line-height:28px;color:#fff;-webkit-text-stroke-width:0.3px;">-</div>
<div class="t" style="left:2029.38px;top:724.40px;font-size:28px;line-height:28px;color:#fff;-webkit-text-stroke-width:0.3px;">-</div>
<div class="t" style="left:2183.38px;top:724.40px;font-size:28px;line-height:28px;color:#fff;-webkit-text-stroke-width:0.3px;">-</div>
<div class="t" style="left:2332.88px;top:724.40px;font-size:28px;line-height:28px;color:#fff;-webkit-text-stroke-width:0.3px;">-</div>
<div class="t" style="left:2482.38px;top:724.40px;font-size:28px;line-height:28px;color:#fff;-webkit-text-stroke-width:0.3px;">-</div>
<div class="b" style="left:2132px;top:20px;width:504px;height:92px;background:#0b0e14;border-radius:20px;"></div>
<div class="b" style="left:2142px;top:30px;width:76px;height:72px;border:2px solid #0c4a8f;border-radius:16px;box-sizing:border-box;background:#0b0e14;"></div>
<div class="b" style="left:2234px;top:30px;width:300px;height:72px;border:2px solid #0c4a8f;border-radius:16px;box-sizing:border-box;background:#0b0e14;"></div>
<div class="b" style="left:2550px;top:30px;width:76px;height:72px;border:2px solid #0c4a8f;border-radius:16px;box-sizing:border-box;background:#0b0e14;"></div>
<svg class="ic" style="left:2156px;top:42px;width:48px;height:48px;fill:#0a7cf0;" viewBox="0 0 24 24"><path d="M17.65 6.35A7.958 7.958 0 0 0 12 4c-4.42 0-7.99 3.58-7.99 8s3.57 8 7.99 8c3.73 0 6.84-2.55 7.73-6h-2.08A5.99 5.99 0 0 1 12 18c-3.31 0-6-2.69-6-6s2.69-6 6-6c1.66 0 3.14.69 4.22 1.78L13 11h7V4l-2.35 2.35z"/></svg>
<svg class="ic" style="left:2250px;top:48px;width:36px;height:36px;fill:#0a7cf0;" viewBox="0 0 24 24"><path d="M20 3h-1V1h-2v2H7V1H5v2H4c-1.1 0-2 .9-2 2v16c0 1.1.9 2 2 2h16c1.1 0 2-.9 2-2V5c0-1.1-.9-2-2-2zm0 18H4V8h16v13z"/></svg>
<div class="t" style="left:2302.60px;top:53.49px;font-size:26px;line-height:26px;color:#0a7cf0;font-weight:700;letter-spacing:0.345px;">Last 60 Days</div>
<svg class="ic" style="left:2481.5px;top:48px;width:36px;height:36px;fill:#0a7cf0;" viewBox="0 0 24 24"><path d="m7 10 5 5 5-5z"/></svg>
<svg class="ic" style="left:2564px;top:42px;width:48px;height:48px;fill:#0a7cf0;" viewBox="0 0 24 24"><path d="M3 17v2h6v-2H3zM3 5v2h10V5H3zm10 16v-2h8v-2h-8v-2h-2v6h2zM7 9v2H3v2h4v2h2V9H7zm14 4v-2H11v2h10zm-6-4h2V7h4V5h-4V3h-2v6z"/></svg>
<div class="t" style="left:616.00px;top:932.73px;font-size:36px;line-height:36px;color:#fff;letter-spacing:1.382px;-webkit-text-stroke-width:0.3px;">Country distribution</div>
<svg class="ic" style="left:760px;top:1160px;width:1040px;height:760px" viewBox="760 1160 1040 760">
<defs><pattern id="dp" width="6" height="6" patternUnits="userSpaceOnUse"><rect width="6" height="6" fill="#d8d4dc"/><circle cx="1.5" cy="1.5" r=".9" fill="#e8a6e6"/><circle cx="4.5" cy="4.5" r=".9" fill="#e8a6e6"/></pattern></defs>
<path d="M904.6 1452.8 L910.5 1457.3 L915.2 1460.8 L922.2 1463.9 L928.1 1473.3 L933.5 1481.0 L934.4 1476.3 L929.7 1470.2 L925.0 1460.8 L919.4 1454.5 L914.0 1458.5 L904.6 1451.4 L896.3 1449.8 L888.6 1448.6 L882.7 1451.4 L877.5 1447.4 L875.7 1455.6 L867.0 1464.6 L854.0 1474.9 L840.6 1479.6 L854.0 1469.7 L864.6 1459.9 L850.5 1459.2 L848.6 1454.5 L841.1 1450.9 L838.3 1443.4 L842.3 1435.7 L850.5 1429.3 L837.6 1425.6 L832.9 1418.5 L838.0 1413.8 L848.9 1413.3 L839.2 1405.1 L835.9 1398.5 L842.3 1396.9 L849.3 1389.8 L857.6 1381.6 L863.9 1377.6 L877.5 1382.8 L891.6 1386.3 L904.6 1391.0Z M868.6 1465.5 L872.8 1462.7 L874.7 1465.5 L870.5 1468.8Z M822.3 1431.0 L830.5 1432.6 L829.6 1435.7 L823.0 1434.0Z M949.9 1503.2 L1027.3 1502.9 L1029.5 1504.3 L1036.7 1506.5 L1046.1 1507.2 L1053.3 1510.8 L1059.1 1515.9 L1061.3 1521.7 L1059.9 1528.9 L1061.3 1531.1 L1069.3 1527.5 L1070.7 1524.6 L1077.9 1523.1 L1082.3 1520.3 L1091.0 1518.8 L1096.0 1511.6 L1100.4 1510.1 L1101.8 1517.4 L1096.7 1523.1 L1093.1 1527.5 L1093.9 1530.4 L1086.6 1534.7 L1080.8 1540.5 L1078.7 1543.4 L1079.4 1547.7 L1077.2 1553.5 L1072.2 1557.9 L1066.4 1563.7 L1063.5 1568.0 L1064.2 1573.8 L1066.4 1579.6 L1067.5 1583.9 L1064.9 1584.6 L1061.3 1578.8 L1057.7 1572.3 L1054.1 1570.2 L1049.0 1569.4 L1044.7 1569.4 L1042.5 1571.6 L1036.0 1570.9 L1030.2 1571.6 L1024.4 1574.5 L1021.5 1578.8 L1020.8 1582.5 L1017.2 1581.0 L1014.3 1576.7 L1011.4 1572.3 L1007.8 1570.9 L1004.2 1571.6 L1000.5 1568.0 L996.9 1565.1 L991.1 1565.8 L985.4 1565.1 L978.1 1564.4 L975.2 1562.2 L968.7 1562.2 L966.5 1557.9 L960.8 1555.7 L957.1 1550.6 L953.5 1543.4 L949.9 1536.2 L948.5 1527.5 L949.9 1518.8 L950.6 1511.6 L953.5 1510.1Z" fill="#5a5864" stroke="#37608f" stroke-opacity=".55" stroke-width=".9" stroke-linejoin="round"/>
<path d="M904.6 1391.0 L914.0 1396.4 L924.6 1390.3 L938.2 1385.6 L941.5 1389.8 L948.1 1388.6 L957.5 1394.5 L966.9 1396.9 L973.9 1404.4 L986.9 1405.8 L989.9 1402.8 L992.7 1406.3 L1009.2 1402.8 L1024.5 1406.3 L1028.0 1396.9 L1023.3 1385.1 L1026.8 1374.5 L1033.9 1378.1 L1038.6 1389.8 L1045.6 1399.2 L1048.0 1406.3 L1051.5 1414.5 L1050.3 1422.7 L1045.6 1427.4 L1039.7 1432.1 L1032.7 1441.5 L1029.2 1450.9 L1030.3 1458.0 L1035.0 1467.4 L1044.5 1472.1 L1053.9 1475.6 L1062.1 1478.0 L1063.3 1486.2 L1066.8 1493.3 L1070.3 1488.6 L1069.8 1480.3 L1075.0 1472.1 L1076.2 1465.0 L1072.7 1455.6 L1072.7 1443.9 L1073.8 1439.2 L1079.7 1439.2 L1089.1 1445.1 L1095.0 1447.4 L1096.2 1455.6 L1100.9 1459.9 L1105.6 1455.6 L1107.5 1450.5 L1111.5 1460.3 L1116.2 1468.6 L1123.2 1475.6 L1131.0 1483.4 L1132.6 1488.6 L1130.3 1493.3 L1126.7 1498.0 L1122.0 1502.7 L1112.6 1506.2 L1106.7 1512.1 L1110.3 1515.6 L1117.3 1514.4 L1123.2 1515.6 L1112.6 1521.5 L1105.6 1523.8 L1101.3 1517.9 L1099.7 1509.7 L1095.0 1510.9 L1089.1 1517.9 L1075.0 1523.3 L1065.6 1527.3 L1059.7 1529.7 L1062.1 1523.8 L1059.7 1519.1 L1052.7 1512.1 L1045.6 1507.4 L1032.7 1506.2 L1028.0 1502.2 L1026.8 1503.1 L952.8 1503.1 L948.1 1500.3 L945.7 1498.0 L938.7 1495.6 L936.3 1488.6 L934.0 1480.3 L934.4 1476.3 L929.7 1470.2 L925.0 1460.8 L919.4 1454.5 L914.0 1458.5 L904.6 1451.4Z M1130.3 1493.3 L1136.1 1501.5 L1139.7 1506.2 L1138.5 1512.1 L1132.6 1509.7 L1126.7 1508.5 L1123.2 1506.2 L1126.7 1499.1Z M924.6 1481.5 L928.1 1480.3 L931.1 1489.7 L927.4 1486.7Z M1045.6 1356.9 L1051.5 1355.7 L1055.0 1364.0 L1063.3 1359.3 L1065.6 1355.7 L1072.7 1357.4 L1077.4 1364.0 L1070.3 1366.3 L1075.0 1373.4 L1086.8 1375.7 L1093.8 1382.8 L1100.9 1389.8 L1099.7 1396.9 L1107.9 1403.9 L1116.2 1411.0 L1112.6 1419.2 L1105.6 1415.7 L1100.9 1418.0 L1106.7 1425.1 L1107.9 1432.1 L1103.2 1441.5 L1096.2 1436.8 L1089.1 1432.1 L1083.2 1427.4 L1075.0 1427.4 L1071.5 1422.7 L1075.0 1418.0 L1082.1 1419.2 L1085.6 1411.0 L1084.4 1401.6 L1077.4 1394.5 L1072.7 1389.8 L1065.6 1391.0 L1056.2 1388.6 L1046.8 1385.1 L1040.9 1378.1 L1040.2 1368.7Z M1052.7 1394.5 L1059.7 1392.2 L1063.3 1399.2 L1062.1 1408.6 L1056.2 1414.5 L1052.7 1411.0 L1050.3 1401.6Z M1051.0 1421.6 L1058.6 1425.1 L1065.6 1431.0 L1062.1 1433.3 L1053.9 1432.1 L1049.2 1429.8Z M1057.4 1436.8 L1063.3 1435.7 L1060.9 1440.4Z M1066.8 1439.2 L1070.3 1438.0 L1069.8 1443.9Z M1075.0 1401.6 L1080.2 1402.8 L1080.9 1408.6 L1076.2 1411.0 L1073.8 1406.3Z M972.8 1360.4 L978.6 1365.1 L985.7 1364.0 L991.6 1368.7 L993.9 1361.6 L999.8 1362.8 L1002.1 1375.7 L1005.7 1385.1 L1011.5 1392.2 L1006.8 1396.9 L997.4 1398.0 L990.4 1400.4 L981.0 1399.2 L972.8 1394.5 L968.0 1387.5 L970.4 1382.8 L964.5 1378.1 L962.6 1372.2 L966.9 1365.1Z M948.1 1350.3 L962.2 1349.9 L972.8 1358.1 L966.9 1364.0 L962.2 1372.2 L959.8 1378.1 L952.8 1381.6 L944.5 1372.2 L946.9 1361.6Z M1008.0 1365.1 L1012.7 1358.1 L1018.6 1357.4 L1022.1 1361.6 L1019.8 1371.0 L1016.2 1376.9 L1010.4 1372.2Z M1015.1 1393.3 L1019.8 1387.9 L1025.6 1394.5 L1024.5 1399.2 L1018.6 1398.0Z M1026.8 1354.6 L1038.6 1354.6 L1033.9 1364.0 L1030.3 1371.0 L1025.6 1369.8 L1024.5 1361.6Z M972.8 1328.7 L979.8 1331.1 L986.9 1334.6 L989.2 1325.2 L992.7 1333.4 L998.6 1338.1 L995.1 1344.0 L985.7 1346.3 L978.6 1349.9 L975.1 1342.8 L966.9 1340.5 L969.2 1333.4Z M962.6 1315.8 L970.4 1314.1 L968.8 1326.3 L959.8 1333.4 L953.2 1332.2 L957.5 1322.8Z M1008.0 1331.1 L1015.1 1325.9 L1019.8 1328.7 L1018.6 1342.8 L1013.9 1345.2 L1009.2 1338.1Z M1023.3 1340.5 L1028.0 1337.6 L1030.3 1346.3 L1024.5 1347.0Z M1022.8 1320.5 L1030.3 1321.6 L1037.4 1331.1 L1045.6 1335.8 L1056.2 1335.3 L1065.6 1336.9 L1068.0 1342.8 L1064.4 1348.7 L1051.5 1349.9 L1038.6 1346.3 L1032.7 1340.5 L1028.0 1331.1 L1022.1 1326.3Z M983.3 1298.1 L988.0 1300.5 L986.2 1304.7 L980.5 1304.0Z M981.0 1307.5 L986.9 1308.7 L985.2 1315.8 L978.2 1313.4Z M999.3 1291.6 L1006.8 1294.6 L1012.7 1300.5 L1015.1 1310.4 L1006.8 1307.5 L1001.0 1301.7Z M1018.1 1298.1 L1023.3 1299.3 L1025.6 1307.5 L1020.9 1309.9 L1017.4 1302.8Z M1023.8 1311.5 L1029.9 1312.2 L1030.3 1315.8 L1024.5 1315.3Z M1028.0 1261.0 L1035.0 1261.7 L1040.9 1269.9 L1046.8 1277.0 L1051.5 1288.7 L1052.7 1293.4 L1048.0 1300.5 L1044.5 1305.7 L1037.4 1306.4 L1030.3 1300.5 L1029.2 1291.1 L1024.5 1284.0 L1022.8 1274.6 L1024.5 1265.2Z M1085.6 1221.0 L1098.5 1222.9 L1110.3 1227.6 L1116.2 1235.8 L1113.8 1244.1 L1105.6 1251.1 L1106.7 1257.0 L1102.0 1258.2 L1098.5 1267.6 L1091.5 1279.3 L1087.9 1286.4 L1079.7 1291.1 L1077.4 1300.5 L1075.0 1312.2 L1072.7 1321.6 L1066.8 1331.1 L1056.2 1327.5 L1043.3 1326.3 L1042.1 1320.5 L1048.0 1312.2 L1045.6 1309.9 L1051.5 1312.2 L1053.9 1302.8 L1050.3 1294.6 L1053.9 1288.7 L1049.2 1277.5 L1060.9 1278.2 L1059.7 1273.5 L1048.0 1272.3 L1042.1 1265.2 L1037.4 1255.8 L1036.2 1248.8 L1039.7 1244.1 L1048.0 1240.5 L1052.7 1234.7 L1058.6 1237.0 L1060.9 1228.8 L1070.3 1224.1Z" fill="#403f4b" stroke="#37608f" stroke-opacity=".55" stroke-width=".9" stroke-linejoin="round"/>
<path d="M1216.1 1416.9 L1224.3 1413.8 L1232.5 1415.7 L1241.9 1413.3 L1244.3 1421.6 L1239.6 1427.4 L1230.2 1432.1 L1221.9 1429.8 L1218.4 1423.9 L1223.1 1421.6Z M968.7 1562.2 L975.2 1562.2 L978.1 1564.4 L985.4 1565.1 L991.1 1565.8 L996.9 1565.1 L1000.5 1568.0 L1004.2 1571.6 L1007.8 1570.9 L1011.4 1572.3 L1014.3 1576.7 L1017.2 1581.0 L1020.8 1582.5 L1020.1 1588.2 L1020.8 1595.5 L1024.4 1601.3 L1028.8 1603.9 L1034.5 1603.4 L1038.2 1599.8 L1039.6 1596.2 L1044.7 1595.5 L1049.0 1595.5 L1046.8 1601.3 L1044.7 1604.2 L1038.9 1604.9 L1036.7 1609.2 L1035.3 1613.6 L1030.2 1611.4 L1024.4 1611.4 L1015.7 1608.5 L1008.5 1604.2 L1002.7 1601.3 L999.1 1598.4 L999.8 1594.0 L995.5 1588.2 L991.1 1582.5 L986.8 1576.7 L982.5 1570.9 L978.1 1565.8 L975.9 1566.5 L979.6 1573.8 L983.9 1581.0 L988.2 1588.2 L987.5 1591.1 L982.5 1585.4 L978.1 1579.6 L973.8 1572.3 L970.9 1566.5Z M1036.7 1607.1 L1042.5 1606.3 L1043.2 1611.4 L1041.0 1615.0 L1036.7 1614.3 L1035.3 1611.4Z M1135.8 1638.9 L1140.9 1639.6 L1144.5 1643.2 L1140.1 1648.3 L1135.8 1647.6 L1135.1 1643.2Z M1100.3 1716.6 L1104.1 1714.4 L1109.0 1716.6 L1112.2 1714.4 L1115.5 1717.1 L1119.8 1720.4 L1127.4 1724.2 L1124.7 1728.5 L1129.6 1730.1 L1135.0 1726.9 L1137.7 1725.3 L1137.2 1728.5 L1132.8 1732.9 L1128.0 1737.7 L1126.9 1742.1 L1125.8 1748.6 L1125.2 1751.8 L1128.0 1755.1 L1130.1 1758.9 L1128.0 1763.8 L1123.1 1765.4 L1115.5 1767.0 L1114.4 1772.5 L1108.4 1774.6 L1107.9 1777.9 L1111.7 1779.0 L1107.9 1782.2 L1106.3 1788.2 L1102.5 1790.4 L1100.8 1793.6 L1103.5 1796.3 L1105.7 1798.0 L1104.1 1801.8 L1100.8 1804.5 L1098.7 1808.8 L1096.5 1811.0 L1097.0 1816.4 L1089.4 1816.4 L1087.8 1812.1 L1085.6 1810.4 L1085.1 1805.6 L1087.8 1800.7 L1089.4 1793.1 L1091.1 1788.2 L1088.4 1782.2 L1089.4 1772.5 L1091.1 1765.9 L1091.6 1759.4 L1094.3 1750.8 L1092.7 1743.2 L1095.4 1732.3 L1098.1 1728.0 L1098.7 1721.5Z M1097.3 1819.7 L1099.7 1826.2 L1106.8 1828.9 L1105.7 1831.6 L1101.9 1830.0 L1097.3 1830.0Z M1346.4 1380.6 L1355.8 1378.8 L1364.0 1384.7 L1361.7 1387.0 L1364.6 1391.1 L1358.7 1389.4 L1354.6 1387.6 L1351.1 1390.5 L1349.3 1395.2 L1346.4 1398.2 L1343.4 1396.4 L1339.9 1397.6 L1337.0 1393.5 L1334.0 1396.4 L1332.9 1399.9 L1328.2 1399.9 L1327.0 1404.1 L1322.3 1408.2 L1319.9 1415.2 L1317.6 1422.3 L1317.0 1428.2 L1314.1 1432.9 L1312.3 1439.9 L1314.1 1445.8 L1311.7 1455.2 L1308.8 1457.5 L1305.2 1460.5 L1299.4 1462.2 L1296.4 1458.7 L1295.0 1451.7 L1294.7 1442.3 L1297.6 1437.6 L1303.5 1434.0 L1307.6 1429.3 L1311.7 1421.1 L1316.4 1412.9 L1321.1 1404.6 L1327.0 1396.4 L1332.9 1390.0 L1339.9 1385.8Z M1351.1 1390.5 L1354.6 1387.6 L1358.7 1389.4 L1357.5 1395.2 L1359.3 1401.1 L1360.5 1405.8 L1358.7 1410.5 L1361.7 1416.4 L1361.1 1422.3 L1362.8 1429.3 L1365.2 1436.4 L1362.2 1442.3 L1358.7 1448.1 L1352.8 1450.5 L1345.8 1452.8 L1341.1 1452.3 L1338.1 1448.1 L1337.6 1442.3 L1337.0 1437.6 L1339.9 1430.5 L1343.4 1425.8 L1347.5 1421.1 L1346.4 1418.8 L1344.6 1416.4 L1344.6 1410.5 L1343.4 1401.1 L1346.4 1398.2 L1349.3 1395.2Z M1302.9 1467.5 L1307.0 1465.8 L1308.8 1464.6 L1309.3 1469.3 L1307.6 1472.8 L1308.2 1476.9 L1304.6 1476.9 L1302.3 1472.8Z M1310.5 1472.2 L1314.1 1471.9 L1313.8 1475.2 L1311.1 1475.2Z M1255.9 1480.5 L1261.2 1476.3 L1261.7 1480.5 L1264.9 1481.0 L1264.9 1482.8 L1264.1 1486.9 L1261.2 1490.5 L1257.6 1492.2 L1254.3 1491.0 L1255.9 1486.9 L1254.7 1483.4Z M1287.6 1494.6 L1290.5 1492.8 L1297.0 1495.2 L1297.6 1498.7 L1294.7 1500.4 L1291.1 1498.1Z M1315.2 1498.7 L1318.8 1496.3 L1322.3 1496.3 L1328.2 1498.1 L1331.1 1500.4 L1327.0 1503.4 L1322.3 1504.0 L1317.6 1502.8Z M1308.2 1509.3 L1312.3 1509.3 L1316.4 1506.9 L1322.3 1504.6 L1327.0 1504.0 L1327.6 1506.9 L1324.6 1510.4 L1318.8 1512.2 L1312.9 1512.8 L1309.3 1511.6Z M1297.6 1512.8 L1301.1 1509.8 L1308.2 1509.8 L1309.3 1512.2 L1305.8 1515.1 L1301.1 1515.7 L1298.8 1515.1Z M1327.6 1504.0 L1331.1 1501.0 L1337.6 1501.0 L1342.3 1502.2 L1339.9 1504.6 L1332.9 1505.7 L1328.2 1506.9Z M1337.6 1472.2 L1343.4 1470.5 L1350.5 1473.4 L1349.9 1478.1 L1345.8 1481.0 L1341.1 1479.9 L1338.1 1476.3Z M1338.1 1467.5 L1339.9 1464.6 L1344.6 1466.4 L1347.5 1462.8 L1353.4 1465.8 L1355.2 1471.6 L1350.5 1473.4 L1343.4 1470.5 L1337.6 1472.2Z M1350.5 1473.4 L1355.2 1471.6 L1361.1 1474.0 L1363.4 1478.1 L1367.5 1484.0 L1364.6 1485.8 L1365.2 1489.9 L1362.2 1492.8 L1354.6 1492.2 L1345.8 1491.6 L1344.6 1491.6 L1343.4 1483.4 L1345.8 1481.0 L1349.9 1478.1Z M1344.6 1491.6 L1354.6 1492.2 L1362.2 1492.8 L1365.2 1489.9 L1370.5 1489.9 L1372.8 1494.0 L1376.3 1497.5 L1382.8 1499.3 L1388.1 1502.2 L1386.9 1506.9 L1382.8 1509.8 L1377.5 1512.8 L1372.8 1515.1 L1376.3 1517.5 L1372.8 1520.4 L1369.3 1518.7 L1368.7 1515.1 L1364.6 1512.8 L1361.1 1515.1 L1358.7 1510.4 L1355.8 1506.9 L1351.7 1505.7 L1345.8 1506.9 L1342.3 1503.4 L1342.8 1500.4 L1343.4 1496.3Z M1257.6 1529.4 L1263.5 1530.6 L1262.3 1537.0 L1261.1 1544.1 L1261.7 1547.6 L1257.6 1547.6 L1255.8 1541.7 L1257.0 1535.8Z M1317.6 1513.5 L1324.6 1511.7 L1329.3 1514.1 L1332.8 1515.3 L1331.7 1519.4 L1328.1 1517.6 L1323.4 1517.0 L1322.3 1520.0 L1326.4 1524.7 L1331.7 1528.8 L1329.3 1529.4 L1323.4 1524.7 L1319.9 1520.6 L1317.6 1517.0Z M1332.3 1515.3 L1337.5 1517.0 L1341.1 1521.7 L1342.2 1525.3 L1342.2 1529.4 L1335.8 1531.1 L1333.4 1527.6 L1332.8 1522.9 L1331.7 1519.4Z M1342.2 1524.1 L1349.3 1522.9 L1356.3 1523.5 L1355.2 1527.6 L1351.6 1530.0 L1349.3 1528.2 L1342.2 1529.4Z M1335.8 1531.1 L1342.2 1529.4 L1349.3 1528.2 L1350.5 1531.1 L1344.6 1532.9 L1341.1 1534.7 L1344.6 1539.4 L1343.4 1545.2 L1341.1 1548.8 L1337.5 1545.2 L1335.8 1539.4 L1333.4 1535.8Z M1396.9 1532.5 L1403.4 1533.7 L1409.2 1531.1 L1413.9 1536.4 L1411.0 1542.3 L1406.9 1541.7 L1403.4 1540.0 L1401.0 1536.4Z M1266.4 1552.3 L1275.2 1552.9 L1276.4 1557.0 L1277.6 1561.7 L1271.7 1564.1 L1269.4 1567.6 L1263.5 1571.1 L1257.6 1574.6 L1257.6 1578.7 L1249.4 1579.3 L1245.3 1586.4 L1241.7 1594.6 L1235.3 1595.2 L1238.2 1588.7 L1242.3 1582.9 L1247.0 1577.0 L1254.1 1571.1 L1255.3 1565.2 L1258.8 1559.3 L1263.5 1555.8Z M1444.9 1570.9 L1456.3 1568.4 L1462.8 1564.4 L1466.9 1559.5 L1470.9 1554.6 L1475.0 1549.7 L1479.1 1548.1 L1482.3 1548.1 L1487.2 1553.0 L1479.1 1554.6 L1478.2 1558.7 L1479.9 1564.4 L1475.0 1572.5 L1469.3 1576.6 L1467.7 1580.7 L1470.1 1585.5 L1463.6 1587.2 L1457.9 1583.1 L1449.8 1583.9 L1444.9 1583.9 L1449.0 1579.0 L1446.5 1575.8Z M1518.1 1585.5 L1521.4 1583.1 L1527.9 1583.9 L1529.5 1588.8 L1528.7 1594.5 L1524.6 1592.0 L1519.7 1593.7Z M1544.2 1600.2 L1549.0 1596.9 L1553.9 1601.8 L1560.4 1605.1 L1561.2 1611.6 L1557.2 1613.2 L1554.7 1616.5 L1552.3 1614.8 L1548.2 1618.1 L1546.6 1627.8 L1549.0 1634.4 L1552.3 1639.2 L1550.7 1640.1 L1546.6 1634.4 L1544.2 1626.2 L1545.0 1616.5 L1541.7 1608.3 L1540.9 1603.4Z M1553.9 1592.9 L1560.4 1591.2 L1566.1 1594.5 L1565.3 1599.4 L1562.9 1603.4 L1568.6 1609.9 L1572.6 1616.5 L1571.8 1623.0 L1566.9 1627.0 L1561.2 1630.3 L1560.4 1626.2 L1566.1 1622.2 L1568.6 1617.3 L1565.3 1611.6 L1561.2 1607.5 L1559.6 1602.6 L1556.4 1597.7Z M1545.8 1631.1 L1550.7 1635.2 L1553.9 1640.9 L1558.0 1649.0 L1553.9 1648.2 L1550.7 1644.1 L1547.4 1638.4Z M1618.2 1544.0 L1623.9 1541.6 L1627.2 1547.3 L1625.5 1553.0 L1619.0 1556.2 L1617.4 1549.7Z M1633.7 1683.8 L1645.9 1687.1 L1642.6 1694.4 L1649.1 1697.6 L1654.8 1700.9 L1658.1 1696.0 L1661.3 1683.0 L1665.4 1691.1 L1669.5 1697.6 L1671.1 1704.2 L1678.4 1709.9 L1684.1 1715.6 L1689.0 1722.1 L1691.0 1731.8 L1689.0 1743.2 L1684.9 1751.4 L1682.5 1761.1 L1676.0 1764.4 L1671.1 1766.8 L1666.2 1765.2 L1661.3 1765.2 L1654.8 1761.1 L1651.6 1754.6 L1649.1 1747.3 L1645.1 1753.8 L1641.8 1750.5 L1636.9 1744.8 L1628.8 1743.2 L1620.7 1744.8 L1612.5 1747.3 L1606.0 1749.7 L1598.7 1752.2 L1593.0 1753.8 L1588.1 1750.5 L1588.9 1743.2 L1586.5 1735.1 L1584.0 1726.9 L1584.8 1715.6 L1589.7 1710.7 L1601.1 1707.4 L1606.0 1702.5 L1610.9 1696.0 L1619.0 1691.1 L1624.7 1694.4 L1627.2 1688.7Z M1667.0 1772.8 L1676.8 1773.8 L1676.0 1779.8 L1671.9 1783.9 L1668.7 1779.0Z M1741.4 1751.7 L1746.8 1758.7 L1749.2 1764.4 L1757.4 1761.9 L1755.7 1767.6 L1750.9 1775.8 L1747.6 1776.6 L1746.0 1770.9 L1744.3 1762.7Z M1741.1 1772.5 L1746.0 1775.0 L1742.7 1782.3 L1737.8 1788.8 L1732.9 1794.5 L1727.3 1794.5 L1725.1 1792.0 L1729.7 1785.5 L1736.2 1780.7Z M1562.9 1669.2 L1570.2 1670.8 L1580.0 1672.4 L1589.7 1675.7 L1588.9 1677.8 L1578.3 1676.5 L1568.6 1674.1 L1562.9 1672.4Z M1592.2 1676.5 L1598.7 1675.7 L1598.7 1678.1 L1593.0 1678.4Z M1601.1 1676.2 L1608.4 1675.2 L1607.6 1677.8Z M1610.1 1680.6 L1616.6 1676.5 L1621.5 1675.7 L1615.8 1678.9 L1611.7 1681.7Z M1535.2 1639.1 L1540.9 1640.7 L1549.0 1648.8 L1557.2 1657.8 L1563.7 1661.8 L1564.5 1670.0 L1560.4 1669.2 L1553.9 1662.7 L1547.4 1653.7 L1540.9 1645.6Z M1593.0 1635.0 L1599.2 1639.1 L1594.6 1643.1 L1598.7 1650.5 L1595.4 1657.0 L1591.4 1664.3 L1584.8 1663.5 L1578.3 1662.7 L1575.1 1660.2 L1572.2 1651.3 L1575.1 1648.0 L1583.2 1643.9 L1588.1 1639.9Z M1602.7 1652.1 L1615.0 1649.6 L1612.5 1652.9 L1605.2 1655.3 L1609.3 1661.8 L1610.1 1667.5 L1606.0 1666.7 L1604.4 1661.0 L1601.9 1668.4 L1598.7 1662.7 L1600.3 1656.1Z M1629.6 1655.3 L1637.7 1655.3 L1639.4 1659.4 L1645.9 1658.6 L1651.6 1658.9 L1657.8 1660.2 L1657.8 1678.1 L1653.2 1675.7 L1648.3 1676.5 L1649.9 1671.6 L1645.9 1668.4 L1641.8 1664.3 L1635.3 1661.8Z M1617.4 1661.8 L1622.3 1661.5 L1629.6 1662.7 L1628.8 1664.3 L1622.3 1663.5 L1617.7 1663.5Z M1602.7 1604.1 L1607.6 1603.3 L1607.6 1611.4 L1610.9 1617.9 L1615.8 1621.2 L1612.5 1623.6 L1607.6 1618.7 L1603.6 1614.6 L1601.9 1608.1Z M1609.3 1630.9 L1616.6 1627.7 L1619.0 1634.2 L1616.6 1638.2 L1610.9 1635.8Z M1609.3 1622.8 L1615.0 1624.4 L1614.1 1629.3 L1610.1 1627.7Z M1325.3 1732.6 L1330.2 1735.1 L1334.3 1730.2 L1333.5 1722.9 L1335.9 1722.1 L1337.5 1726.9 L1343.2 1723.7 L1348.9 1725.3 L1353.0 1721.2 L1357.1 1716.4 L1361.1 1714.7 L1364.4 1715.6 L1366.0 1721.2 L1365.2 1725.3 L1368.4 1728.6 L1367.6 1732.6 L1362.7 1739.2 L1358.7 1744.8 L1353.0 1748.9 L1346.5 1750.5 L1340.0 1751.4 L1333.5 1753.3 L1330.2 1750.5 L1329.4 1743.2 L1326.9 1738.3Z M1348.9 1703.3 L1353.8 1700.9 L1360.3 1696.8 L1366.0 1697.6 L1368.9 1701.7 L1368.4 1707.4 L1365.2 1713.9 L1361.1 1714.7 L1357.1 1712.3 L1353.0 1707.4Z M1309.4 1285.8 L1316.4 1281.1 L1317.6 1285.8 L1323.5 1280.6 L1328.2 1282.3 L1332.9 1289.3 L1338.3 1296.4 L1332.9 1302.2 L1329.4 1311.6 L1327.0 1323.4 L1323.5 1324.6 L1317.6 1317.5 L1320.0 1312.8 L1315.3 1304.6 L1310.6 1295.2Z M1327.0 1275.9 L1335.2 1271.7 L1339.9 1274.0 L1343.5 1271.2 L1350.5 1275.2 L1354.1 1281.1 L1350.5 1288.1 L1343.5 1290.0 L1335.2 1288.1 L1330.5 1281.1Z M1337.6 1305.8 L1341.6 1303.4 L1347.0 1311.2 L1341.1 1315.9 L1335.9 1314.0Z" fill="#3f3e4a" stroke="#37608f" stroke-opacity=".55" stroke-width=".9" stroke-linejoin="round"/>
<path d="M1337.0 1393.5 L1339.9 1397.6 L1343.4 1401.1 L1344.6 1410.5 L1344.6 1416.4 L1341.1 1418.8 L1338.1 1422.3 L1337.0 1427.6 L1331.7 1434.0 L1328.2 1439.9 L1327.0 1444.6 L1328.2 1449.3 L1331.1 1452.8 L1327.6 1458.7 L1325.8 1464.6 L1324.0 1469.3 L1319.9 1472.8 L1316.4 1475.2 L1314.1 1470.5 L1311.7 1463.4 L1310.5 1457.5 L1311.7 1455.2 L1314.1 1445.8 L1312.3 1439.9 L1314.1 1432.9 L1317.0 1428.2 L1317.6 1422.3 L1319.9 1415.2 L1322.3 1408.2 L1327.0 1404.1 L1328.2 1399.9 L1332.9 1399.9 L1334.0 1396.4Z" fill="#42414d" stroke="#37608f" stroke-opacity=".55" stroke-width=".9" stroke-linejoin="round"/>
<path d="M1266.4 1460.5 L1272.3 1459.3 L1271.7 1463.4 L1275.3 1464.6 L1274.1 1470.5 L1276.4 1475.2 L1280.0 1481.0 L1282.3 1486.9 L1285.3 1489.9 L1284.7 1494.0 L1278.8 1495.7 L1271.7 1496.9 L1266.4 1498.7 L1268.2 1495.2 L1271.7 1492.2 L1267.6 1491.6 L1269.4 1486.9 L1268.2 1485.2 L1271.1 1482.8 L1268.8 1478.7 L1265.3 1476.3 L1266.4 1471.6 L1264.7 1467.5Z M1261.2 1476.3 L1265.3 1478.1 L1264.9 1481.0 L1261.7 1480.5Z" fill="#434250" stroke="#37608f" stroke-opacity=".55" stroke-width=".9" stroke-linejoin="round"/>
<path d="M1293.5 1485.8 L1298.8 1484.0 L1299.9 1488.1 L1298.8 1492.8 L1297.0 1495.2 L1293.5 1494.0 L1290.5 1492.8 L1292.3 1489.3Z" fill="#4a4955" stroke="#37608f" stroke-opacity=".55" stroke-width=".9" stroke-linejoin="round"/>
<path d="M1287.6 1494.6 L1291.1 1498.1 L1294.7 1500.4 L1297.6 1498.7 L1297.6 1501.0 L1301.7 1504.6 L1301.1 1508.7 L1297.6 1512.8 L1298.8 1516.3 L1299.9 1522.2 L1296.4 1525.7 L1290.5 1525.1 L1285.3 1528.7 L1278.8 1526.9 L1277.0 1524.5 L1277.6 1516.3 L1275.3 1510.4 L1269.4 1506.9 L1268.8 1504.6 L1275.3 1504.0 L1276.4 1501.0 L1281.1 1501.0 L1284.7 1497.5Z" fill="#434250" stroke="#37608f" stroke-opacity=".55" stroke-width=".9" stroke-linejoin="round"/>
<path d="M1304.1 1478.1 L1307.6 1478.1 L1309.3 1480.5 L1313.5 1479.9 L1317.6 1481.0 L1318.8 1485.8 L1319.9 1491.6 L1318.8 1496.3 L1315.2 1498.7 L1317.6 1502.8 L1316.4 1506.9 L1312.3 1509.3 L1308.2 1509.3 L1301.1 1508.7 L1301.7 1504.6 L1297.6 1501.0 L1297.0 1495.2 L1298.8 1492.8 L1299.9 1488.1 L1299.4 1484.0 L1303.5 1482.8Z" fill="url(#dp)" stroke="#37608f" stroke-opacity=".55" stroke-width=".9" stroke-linejoin="round"/>
<path d="M1318.8 1482.8 L1327.0 1478.7 L1332.9 1479.9 L1341.1 1479.9 L1343.4 1483.4 L1344.6 1491.6 L1343.4 1496.3 L1342.8 1500.4 L1337.6 1501.0 L1332.9 1499.9 L1328.2 1498.1 L1322.3 1496.3 L1319.9 1491.6 L1318.8 1485.8Z" fill="#484752" stroke="#37608f" stroke-opacity=".55" stroke-width=".9" stroke-linejoin="round"/>
<path d="M1256.4 1525.8 L1261.1 1524.7 L1269.4 1524.7 L1276.4 1525.3 L1282.3 1527.6 L1288.8 1528.2 L1287.0 1531.7 L1283.5 1534.7 L1280.5 1539.4 L1278.8 1544.1 L1275.2 1547.6 L1269.4 1549.4 L1265.3 1549.9 L1261.7 1547.6 L1261.1 1544.1 L1262.3 1537.0 L1263.5 1530.6 L1257.6 1529.4Z" fill="#4a4a56" stroke="#37608f" stroke-opacity=".55" stroke-width=".9" stroke-linejoin="round"/>
<path d="M1298.2 1512.3 L1302.3 1510.0 L1309.3 1511.7 L1316.4 1513.5 L1317.6 1517.0 L1314.0 1519.4 L1317.6 1524.1 L1322.3 1528.8 L1328.1 1533.5 L1330.5 1536.4 L1327.5 1538.2 L1326.4 1541.7 L1323.4 1543.5 L1324.0 1539.4 L1321.1 1535.8 L1316.4 1532.3 L1311.7 1527.6 L1308.2 1524.1 L1304.6 1521.7 L1302.3 1522.3 L1299.9 1517.0Z M1314.0 1544.7 L1321.7 1543.5 L1321.1 1547.6 L1316.4 1547.0Z" fill="#42414d" stroke="#37608f" stroke-opacity=".55" stroke-width=".9" stroke-linejoin="round"/>
<path d="M1347.5 1565.8 L1352.8 1565.2 L1358.7 1567.0 L1362.8 1565.2 L1368.1 1565.8 L1372.8 1567.6 L1375.2 1566.4 L1374.0 1571.1 L1371.6 1574.6 L1368.7 1571.1 L1371.6 1577.6 L1375.2 1586.4 L1379.3 1594.0 L1347.5 1594.0Z" fill="#46454f" stroke="#37608f" stroke-opacity=".55" stroke-width=".9" stroke-linejoin="round"/>
<path d="M1514.9 1504.2 L1523.0 1510.7 L1524.6 1517.2 L1534.4 1522.1 L1537.6 1526.9 L1547.4 1528.6 L1560.4 1531.0 L1570.2 1528.6 L1578.3 1525.3 L1580.0 1520.4 L1586.5 1518.8 L1594.6 1513.1 L1600.3 1512.3 L1598.7 1508.2 L1591.4 1508.2 L1589.7 1504.2 L1592.2 1500.9 L1598.7 1499.3 L1601.9 1494.4 L1601.1 1488.7 L1604.4 1485.4 L1610.9 1484.3 L1617.4 1487.1 L1620.7 1492.8 L1623.1 1500.1 L1628.8 1504.2 L1632.0 1508.2 L1641.8 1505.5 L1639.4 1512.3 L1636.1 1517.2 L1632.0 1519.6 L1631.2 1525.3 L1625.5 1528.6 L1619.0 1531.8 L1612.5 1537.5 L1606.0 1540.0 L1604.4 1535.1 L1599.5 1538.3 L1596.2 1542.4 L1602.7 1544.8 L1607.6 1546.5 L1602.7 1551.4 L1600.3 1555.4 L1605.2 1562.7 L1606.8 1569.3 L1604.4 1577.4 L1599.5 1583.9 L1594.6 1588.8 L1586.5 1592.9 L1578.3 1595.3 L1575.1 1596.9 L1568.6 1594.5 L1563.7 1590.4 L1557.2 1592.0 L1553.9 1593.7 L1547.4 1591.2 L1544.2 1583.9 L1544.2 1579.0 L1540.9 1575.8 L1537.6 1572.5 L1531.1 1575.0 L1524.6 1576.6 L1514.9 1578.2 L1508.4 1575.8 L1500.2 1570.9 L1493.7 1566.0 L1490.5 1561.1 L1492.1 1556.2 L1487.2 1553.0 L1482.3 1548.1 L1479.1 1541.6 L1480.7 1536.7 L1488.8 1533.5 L1496.1 1528.6 L1494.5 1521.2 L1501.8 1516.4 L1502.7 1510.7 L1510.0 1508.2Z M1571.8 1599.4 L1575.9 1597.7 L1577.5 1601.8 L1574.3 1604.3 L1571.0 1602.6Z" fill="#403f4b" stroke="#37608f" stroke-opacity=".55" stroke-width=".9" stroke-linejoin="round"/>
<path d="M1479.1 1554.6 L1487.2 1553.0 L1492.1 1556.2 L1490.5 1561.1 L1493.7 1566.0 L1495.3 1570.9 L1511.6 1579.0 L1516.5 1580.7 L1518.1 1585.5 L1518.9 1593.7 L1511.6 1597.7 L1506.7 1601.8 L1500.2 1608.3 L1495.3 1611.6 L1494.5 1619.7 L1492.9 1627.8 L1488.8 1631.9 L1484.8 1626.2 L1480.7 1616.5 L1476.6 1606.7 L1475.0 1596.9 L1470.9 1596.1 L1466.9 1592.9 L1463.6 1587.2 L1470.1 1585.5 L1467.7 1580.7 L1469.3 1576.6 L1475.0 1572.5 L1479.9 1564.4 L1478.2 1558.7Z M1516.5 1580.7 L1518.9 1577.4 L1524.6 1576.6 L1531.1 1575.0 L1537.6 1572.5 L1540.9 1575.8 L1544.2 1579.0 L1541.7 1583.9 L1537.6 1587.2 L1532.0 1592.9 L1529.5 1588.8 L1527.9 1583.9 L1521.4 1583.1 L1518.1 1585.5Z" fill="#444350" stroke="#37608f" stroke-opacity=".55" stroke-width=".9" stroke-linejoin="round"/>
<path d="M1093.9 1659.1 L1092.4 1664.9 L1086.6 1667.8 L1083.7 1673.6 L1086.6 1679.4 L1092.4 1680.8 L1098.2 1683.7 L1105.4 1680.8 L1109.8 1686.6 L1117.0 1689.5 L1119.9 1693.9 L1120.0 1694.1 L1120.9 1696.5 L1121.9 1696.9 L1125.7 1702.5 L1125.7 1706.9 L1125.8 1707.2 L1125.8 1707.4 L1126.9 1712.8 L1128.4 1713.6 L1128.6 1714.1 L1132.6 1717.3 L1133.9 1719.8 L1134.8 1720.9 L1134.4 1723.5 L1136.8 1726.6 L1132.8 1732.9 L1128.0 1737.7 L1132.8 1741.0 L1138.3 1746.4 L1140.4 1744.2 L1144.5 1739.4 L1145.9 1739.9 L1150.8 1731.9 L1151.3 1731.2 L1151.3 1730.7 L1154.6 1723.5 L1158.7 1719.9 L1162.1 1718.2 L1168.6 1716.0 L1173.0 1711.7 L1176.2 1704.1 L1176.7 1701.9 L1177.0 1701.1 L1177.3 1699.0 L1177.9 1696.5 L1177.8 1695.7 L1178.5 1691.0 L1182.1 1685.2 L1187.2 1677.9 L1187.9 1672.2 L1183.5 1666.4 L1173.4 1661.3 L1163.3 1659.9 L1153.2 1655.5 L1147.4 1650.5 L1144.5 1643.2 L1140.1 1648.3 L1135.8 1647.6 L1130.0 1648.3 L1124.2 1649.7 L1121.3 1644.7 L1117.0 1641.0 L1111.2 1642.5 L1108.3 1646.1 L1105.4 1651.2 L1101.8 1649.0 L1095.3 1650.5Z" fill="#454450" stroke="#37608f" stroke-opacity=".55" stroke-width=".9" stroke-linejoin="round"/>
<path d="M1067.8 1672.2 L1072.2 1679.4 L1076.5 1688.1 L1077.0 1688.9 L1077.0 1688.9 L1078.6 1694.3 L1082.9 1697.6 L1085.0 1698.6 L1088.1 1701.1 L1093.1 1704.0 L1093.3 1703.7 L1093.8 1704.1 L1096.5 1699.8 L1096.0 1695.7 L1096.0 1695.3 L1097.5 1688.1 L1095.3 1685.2 L1092.4 1680.8 L1086.6 1679.4 L1083.7 1673.6 L1086.6 1667.8 L1092.4 1664.9 L1093.9 1659.1 L1088.1 1659.9 L1083.7 1657.7 L1080.8 1657.7 L1073.6 1662.0 L1068.5 1666.4 L1064.2 1666.4Z" fill="#3f3e4a" stroke="#37608f" stroke-opacity=".55" stroke-width=".9" stroke-linejoin="round"/>
<path d="M1495.0 1569.6 L1498.6 1569.3 L1506.7 1572.8 L1514.1 1575.4 L1517.3 1576.6 L1516.5 1579.8 L1511.6 1579.4 L1504.3 1577.4 L1497.0 1573.8Z M1519.3 1576.1 L1525.4 1575.8 L1525.9 1578.7 L1520.1 1579.0Z M1353.0 1736.7 L1356.2 1733.8 L1358.7 1737.0 L1355.4 1740.0Z M1362.7 1726.6 L1365.2 1725.0 L1366.8 1727.8 L1364.4 1729.9Z" fill="#0c1017" stroke="#2a4b78" stroke-width=".8"/>
<path d="M1086.8 1302.8 L1093.8 1295.8 L1106.7 1286.4 L1105.6 1279.3 L1099.7 1278.2 L1104.4 1265.2 L1112.6 1255.8 L1115.0 1248.8 L1123.2 1244.5 L1136.1 1242.9 L1139.7 1247.6 L1146.7 1238.2 L1156.1 1246.4 L1160.8 1252.3 L1156.1 1237.0 L1164.3 1222.9 L1173.7 1220.6 L1178.4 1213.5 L1190.2 1211.6 L1209.0 1213.5 L1225.5 1232.3 L1220.8 1239.4 L1197.3 1242.9 L1196.1 1246.4 L1216.1 1245.2 L1220.8 1251.1 L1219.6 1261.7 L1230.2 1253.5 L1239.6 1248.8 L1247.8 1252.3 L1249.0 1259.3 L1239.6 1272.3 L1232.5 1278.2 L1227.8 1279.3 L1230.2 1288.7 L1227.8 1300.5 L1230.2 1314.6 L1226.6 1324.0 L1229.0 1335.8 L1225.5 1349.9 L1220.8 1359.3 L1224.3 1368.7 L1220.8 1378.1 L1214.9 1380.4 L1219.6 1387.5 L1211.4 1394.5 L1202.0 1400.4 L1194.9 1402.8 L1187.9 1411.0 L1180.8 1415.7 L1172.6 1422.7 L1167.9 1436.8 L1165.5 1449.8 L1160.8 1450.9 L1151.4 1445.1 L1145.5 1434.5 L1139.7 1420.4 L1137.3 1408.6 L1142.0 1396.9 L1145.5 1389.8 L1140.8 1393.3 L1135.0 1389.8 L1136.1 1382.8 L1140.8 1379.2 L1133.8 1375.7 L1130.3 1364.0 L1127.9 1352.2 L1123.2 1338.1 L1112.6 1331.1 L1098.5 1332.2 L1090.3 1322.8 L1100.9 1316.9 L1089.1 1312.2 L1085.6 1307.5Z M801.1 1396.9 L815.2 1411.0 L816.4 1413.3 L823.5 1411.0 L827.7 1416.9 L821.1 1421.6 L819.9 1426.3 L816.4 1428.6 L810.5 1423.9 L809.4 1419.2 L802.3 1416.9 L801.8 1423.9 M801.1 1375.7 L805.8 1376.2 L807.0 1378.1 L801.8 1380.9 M1627.2 1560.3 L1632.0 1555.4 L1640.2 1552.2 L1646.7 1546.5 L1653.2 1540.0 L1656.5 1533.5 L1658.9 1528.6 L1658.1 1533.5 L1659.7 1541.6 L1656.5 1551.4 L1649.9 1555.4 L1643.4 1558.7 L1635.3 1561.1 L1630.4 1566.0 L1627.2 1562.7Z M1654.8 1528.6 L1661.3 1523.7 L1669.5 1522.1 L1668.7 1526.1 L1663.0 1528.6 L1658.1 1531.8Z M1661.3 1480.6 L1667.0 1503.3 L1663.0 1512.3 L1665.4 1515.6 L1661.3 1520.4 L1658.9 1504.2 L1660.5 1491.1Z M1632.0 1525.3 L1636.9 1526.9 L1643.4 1522.1 L1651.6 1512.3 L1658.1 1497.6 L1659.7 1484.6 L1653.2 1480.6 L1646.7 1483.0 L1641.8 1478.1 L1660.5 1457.0 L1679.2 1456.1 L1684.1 1454.5 L1684.9 1458.6 L1693.9 1457.0 L1693.1 1452.1 L1698.8 1444.8 L1706.9 1443.1 L1708.5 1448.8 L1715.0 1445.6 L1716.7 1439.1 L1719.9 1438.2 L1719.1 1443.9 L1713.4 1450.5 L1706.9 1458.6 L1698.8 1465.1 L1696.3 1471.6 L1697.1 1484.6 L1699.6 1494.4 L1708.5 1484.6 L1715.0 1471.6 L1716.7 1465.1 L1713.4 1461.8 L1718.3 1453.7 L1723.2 1452.1 L1732.9 1448.8 L1735.4 1452.1 L1744.3 1443.9 L1754.1 1439.1 L1759.8 1439.1 L1759.0 1429.3 L1755.7 1426.0 L1759.8 1424.4 M1471.7 1414.6 L1477.4 1403.3 L1480.7 1396.7 L1482.3 1404.9 L1475.0 1416.3Z M1401.1 1271.2 L1408.1 1269.3 L1415.2 1266.5 L1418.7 1270.5 L1411.6 1276.4 L1408.1 1281.1 L1405.8 1276.4Z M1464.5 1323.4 L1461.0 1322.2 L1454.0 1326.9 L1444.6 1330.5 L1435.2 1337.5 L1429.3 1344.6 L1428.1 1350.4 L1424.6 1356.3 L1421.1 1365.7 L1418.7 1372.8 L1421.1 1378.6 L1425.8 1382.2 L1434.0 1383.3 L1430.5 1377.5 L1428.6 1370.4 L1431.6 1361.0 L1435.2 1352.8 L1442.2 1343.4 L1451.6 1336.3 L1461.0 1331.6 L1464.5 1326.9Z M1536.7 1261.1 L1529.2 1268.2 L1524.5 1275.9 L1528.0 1279.9 L1529.2 1288.1 L1533.9 1295.2 L1540.9 1298.7 L1546.8 1297.5 L1548.5 1287.0 L1545.6 1276.4 L1540.9 1267.0Z M1552.7 1291.2 L1559.7 1297.5 L1562.6 1302.2 L1560.9 1305.8 L1546.8 1310.0 L1549.2 1301.1Z M1650.3 1331.6 L1658.5 1331.6 L1666.7 1336.3 L1667.4 1344.6 L1658.5 1345.7 L1651.4 1347.4 L1646.3 1339.9Z M1671.4 1338.0 L1683.2 1342.2 L1680.8 1346.9 L1673.8 1344.6Z M1655.0 1358.7 L1659.7 1355.1 L1664.4 1361.0 L1656.1 1361.0Z M1364.6 1389.2 L1371.7 1393.9 L1378.7 1397.5 L1387.0 1403.3 L1390.5 1408.0 L1388.6 1413.9 L1383.4 1416.3 L1370.5 1412.7 L1374.0 1418.6 L1375.2 1426.8 L1378.7 1430.4 L1381.1 1425.7 L1388.1 1425.7 L1387.0 1419.8 L1394.0 1415.1 L1398.7 1416.3 L1400.4 1405.7 L1397.5 1399.8 L1404.6 1402.2 L1403.4 1408.0 L1405.8 1411.6 L1409.3 1406.9 L1421.1 1398.6 L1425.3 1397.5 L1424.6 1402.2 L1430.5 1401.0 L1437.0 1398.6 L1441.7 1401.0 L1443.4 1390.4 L1449.3 1391.6 L1458.7 1397.5 L1464.5 1402.2 L1465.7 1398.6 L1461.0 1391.6 L1458.7 1381.0 L1464.5 1368.1 L1468.1 1363.4 L1475.1 1365.7 L1473.9 1375.1 L1476.3 1384.5 L1479.8 1396.3 L1481.0 1404.5 L1473.9 1415.1 L1471.6 1415.1 L1478.6 1403.3 L1476.3 1391.6 L1478.6 1384.5 L1476.3 1379.8 L1481.0 1372.8 L1481.0 1364.5 L1483.3 1378.6 L1484.5 1373.9 L1493.9 1369.2 L1498.2 1373.2 L1495.1 1363.4 L1497.5 1355.8 L1511.6 1354.0 L1510.4 1349.3 L1515.1 1342.2 L1526.8 1335.2 L1531.1 1332.8 L1536.2 1332.8 L1538.6 1334.0 L1545.6 1328.1 L1550.3 1327.6 L1552.7 1319.9 L1559.3 1313.5 L1564.0 1317.5 L1560.9 1319.9 L1565.6 1322.2 L1568.0 1326.9 L1576.2 1325.3 L1583.3 1330.5 L1585.6 1336.3 L1582.1 1344.6 L1573.9 1351.6 L1582.1 1355.1 L1584.4 1359.8 L1585.6 1356.3 L1597.4 1357.5 L1599.7 1362.2 L1610.3 1362.9 L1611.0 1356.8 L1619.7 1358.0 L1624.4 1364.5 L1625.6 1372.8 L1631.5 1381.7 L1633.8 1374.6 L1637.3 1376.3 L1643.2 1375.1 L1647.9 1377.0 L1653.8 1375.1 L1652.6 1368.1 L1656.1 1365.2 L1679.6 1370.4 L1684.3 1376.3 L1689.0 1381.0 L1697.3 1380.5 L1705.5 1382.2 L1708.3 1391.6 L1714.9 1392.3 L1729.0 1391.6 L1733.7 1398.2 L1736.5 1395.8 L1734.9 1388.8 L1747.8 1389.2 L1757.2 1392.8 L1760.7 1396.3 M1760.7 1376.3 L1758.4 1379.8 L1760.7 1382.2 M1760.7 1424.5 L1754.9 1426.8 L1758.4 1436.2" fill="none" stroke="#1f3047" stroke-width="1" stroke-linejoin="round"/>
<path d="M1043.2 1611.4 L1050.5 1610.7 L1058.4 1613.6 L1059.1 1620.1 L1057.7 1625.9 L1060.6 1630.9 L1066.4 1632.4 L1071.4 1628.8 L1074.3 1630.9 L1072.9 1633.1 M1035.3 1613.6 L1041.0 1617.2 L1047.6 1620.1 L1051.9 1625.9 L1057.7 1631.6 L1064.9 1633.8 L1067.8 1632.4 L1072.9 1633.1 M1043.2 1615.0 L1049.0 1615.7 L1050.5 1610.7 M1047.6 1620.1 L1053.3 1617.9 L1058.4 1615.7 M1051.9 1625.9 L1058.4 1625.1 M1059.1 1627.3 L1061.3 1630.9 M1072.9 1633.1 L1075.0 1630.2 L1079.4 1625.9 L1086.6 1623.0 L1089.5 1620.8 L1091.0 1623.0 L1087.3 1627.3 L1088.1 1633.1 L1093.9 1636.7 L1099.6 1638.9 L1100.4 1644.7 L1101.8 1649.0 L1095.3 1650.5 L1093.9 1659.1 L1088.1 1659.9 L1083.7 1657.7 L1079.4 1654.8 L1070.7 1650.5 L1073.6 1643.2 L1075.0 1637.4Z M1091.0 1623.0 L1093.9 1622.2 L1102.5 1625.9 L1112.7 1624.4 L1118.4 1625.9 L1121.3 1630.9 L1118.4 1636.0 L1117.0 1641.0 L1111.2 1642.5 L1108.3 1646.1 L1105.4 1651.2 L1101.8 1649.0 M1121.3 1630.9 L1127.1 1637.4 L1135.8 1638.9 M1118.4 1636.0 L1122.8 1638.9 L1121.3 1644.7 M1127.1 1637.4 L1126.4 1643.2 L1130.0 1648.3 M1135.8 1638.9 L1135.1 1643.2 L1135.8 1647.6 M1066.4 1653.3 L1070.7 1650.5 L1079.4 1654.8 L1080.8 1657.7 L1073.6 1662.0 L1068.5 1666.4 L1064.9 1660.6Z M1097.5 1688.1 L1096.0 1695.3 L1095.3 1701.1 L1098.9 1708.3 L1101.1 1717.0 M1101.1 1717.0 L1105.4 1714.1 L1114.1 1714.1 L1115.6 1708.3 L1125.7 1706.9 M1138.3 1746.4 L1136.6 1751.8 L1131.8 1753.5 L1125.8 1751.8 M1114.4 1711.7 L1116.0 1707.4 L1122.0 1706.3 L1125.8 1707.4 M1114.4 1711.7 L1115.5 1717.1 M1136.1 1722.5 L1132.8 1728.0 L1127.4 1729.1 L1125.8 1726.9 L1127.4 1724.2 M1096.5 1699.8 L1098.1 1706.3 L1100.3 1716.6 M1100.3 1716.6 L1106.8 1713.3 L1114.4 1711.7 M1343.4 1456.4 L1350.5 1454.6 L1355.8 1455.8 L1354.6 1461.7 L1353.4 1465.8 L1347.5 1462.8 L1344.0 1461.1Z M1406.9 1497.5 L1416.3 1492.2 L1423.4 1494.0 L1429.2 1496.9 L1437.5 1494.0 L1442.2 1496.9 L1446.3 1492.8 L1442.2 1489.3 L1445.1 1482.8 L1455.1 1479.9 L1465.7 1475.2 L1470.4 1476.9 L1471.6 1481.0 L1477.4 1483.4 L1485.7 1479.9 L1491.5 1491.6 L1496.2 1496.3 L1499.9 1494.0 M1406.9 1497.5 L1404.6 1503.4 L1409.3 1510.4 L1412.8 1515.1 L1421.0 1511.6 L1423.4 1514.0 L1421.6 1519.8 L1416.3 1522.8 L1419.8 1529.2 L1425.7 1533.9 M1327.6 1506.9 L1326.4 1510.4 L1331.7 1514.5 L1337.6 1512.8 L1339.9 1509.3 L1342.3 1503.4 M1339.9 1509.3 L1345.8 1506.9 M1337.6 1512.8 L1341.1 1518.7 L1345.8 1522.2 L1356.4 1521.6 L1358.7 1516.3 L1361.1 1515.1 M1355.8 1506.9 L1358.7 1512.8 L1358.7 1516.3 M1304.0 1528.8 L1307.0 1527.6 L1307.6 1539.4 L1304.6 1540.5 L1303.5 1534.7Z M1304.0 1520.0 L1305.8 1519.4 L1306.4 1525.3 L1304.4 1525.3Z M1275.2 1552.9 L1281.1 1549.4 L1290.5 1547.6 L1302.3 1547.0 L1308.2 1546.4 L1309.9 1551.1 L1309.3 1555.8 L1311.7 1560.5 L1317.6 1561.1 L1322.3 1564.1 L1330.5 1567.6 L1334.6 1563.5 L1338.7 1561.7 L1344.6 1562.9 L1347.5 1565.8 M1235.3 1595.2 L1236.5 1602.8 L1237.0 1609.9 L1234.1 1614.0 L1236.5 1619.3 L1240.0 1623.4 L1244.7 1628.7 L1249.4 1634.6 L1255.3 1639.9 L1261.1 1642.2 L1272.9 1640.5 L1281.1 1638.1 L1290.5 1637.5 L1296.4 1641.6 L1303.5 1641.6 L1305.8 1646.3 L1307.0 1651.0 L1304.6 1655.7 L1306.4 1660.4 L1310.5 1665.1 L1314.0 1668.7 L1315.2 1675.7 L1317.6 1684.9 M1277.6 1561.7 L1271.7 1566.4 L1258.8 1574.0 L1257.6 1578.7 M1257.6 1578.7 L1290.5 1601.1 L1312.9 1589.9 L1307.0 1582.9 L1306.4 1569.9 L1309.3 1562.9 L1308.2 1555.8 L1302.3 1551.1 L1302.3 1547.0 M1309.3 1555.8 L1311.7 1560.5 M1312.9 1589.9 L1321.1 1591.1 L1344.6 1599.3 L1347.5 1599.3 L1347.5 1594.0 M1347.5 1565.8 L1347.5 1594.0 M1347.5 1594.0 L1379.3 1594.0 M1249.4 1579.3 L1249.4 1584.0 L1264.1 1584.6 L1266.4 1611.1 L1250.6 1612.8 L1248.2 1614.6 M1235.3 1595.2 L1242.3 1594.6 L1245.3 1586.4 M1290.5 1601.1 L1292.3 1607.5 L1288.8 1612.2 L1278.8 1613.4 L1271.7 1616.9 L1267.0 1622.8 L1265.8 1626.3 L1258.8 1626.3 L1255.3 1621.6 L1249.4 1619.3 L1248.2 1614.6 L1242.3 1608.7 L1236.5 1609.9 M1290.5 1601.1 L1292.9 1601.7 L1321.1 1591.1 M1321.1 1591.1 L1323.4 1598.1 L1321.1 1607.5 L1317.6 1614.6 L1319.9 1620.5 L1321.1 1626.3 L1322.3 1632.8 L1329.3 1631.0 L1336.4 1627.5 L1342.2 1624.0 L1339.9 1618.1 L1342.2 1611.1 L1344.6 1608.7 L1344.6 1599.3 M1288.8 1612.2 L1291.7 1617.5 L1295.2 1616.4 L1302.3 1619.3 L1316.4 1616.9 L1319.9 1620.5 M1291.7 1617.5 L1289.3 1625.2 L1287.6 1637.5 M1281.1 1613.4 L1285.8 1620.5 L1283.5 1624.0 L1284.6 1636.9 M1273.5 1624.6 L1283.5 1624.0 M1273.5 1624.6 L1271.7 1634.6 L1273.5 1640.5 M1258.8 1626.3 L1260.6 1641.6 M1281.7 1624.6 L1282.9 1637.5 M1319.9 1620.5 L1314.0 1631.0 L1307.0 1635.8 L1303.5 1641.6 M1322.3 1632.8 L1319.9 1638.1 L1322.3 1645.2 L1328.1 1645.2 L1331.7 1641.6 L1342.2 1639.3 L1351.6 1639.3 L1342.2 1624.0 M1351.6 1639.3 L1361.0 1644.0 L1371.6 1642.8 L1374.0 1639.3 L1368.7 1632.2 L1371.6 1625.2 L1366.9 1620.5 L1361.0 1626.3 L1349.3 1627.5 L1344.6 1631.0 L1342.2 1624.0 M1371.6 1625.2 L1377.5 1614.6 L1379.3 1607.5 L1383.4 1605.8 M1379.3 1594.0 L1383.4 1605.8 L1388.1 1614.6 L1394.0 1620.5 L1396.3 1627.5 L1403.4 1631.0 L1409.2 1632.2 L1402.2 1640.5 L1390.4 1645.2 L1383.4 1644.0 L1374.0 1639.3 M1388.1 1614.6 L1377.5 1614.6 M1322.3 1645.2 L1325.8 1646.3 L1323.4 1656.9 L1318.7 1666.3 L1314.0 1668.7 M1305.8 1647.5 L1319.9 1648.7 L1321.1 1654.6 L1316.4 1659.3 L1311.7 1660.4 L1310.5 1665.1 M1328.1 1645.2 L1329.3 1641.6 M1371.6 1642.8 L1374.0 1648.7 L1371.6 1655.7 L1384.6 1666.3 L1389.3 1659.3 L1391.6 1656.9 M1390.4 1645.2 L1390.4 1655.7 L1391.6 1656.9 M1371.6 1655.7 L1361.0 1656.9 L1358.7 1662.8 L1359.9 1669.8 L1364.6 1676.9 L1372.8 1682.8 L1384.6 1684.9 M1359.9 1656.9 L1363.4 1646.3 L1361.0 1644.0 M1384.6 1666.3 L1385.7 1678.1 L1388.1 1684.9 M1315.2 1669.2 L1323.4 1669.8 L1328.1 1674.5 L1337.5 1673.4 L1339.9 1682.8 L1349.3 1684.9 M1356.3 1684.9 L1358.7 1676.9 L1364.6 1676.9 M1375.2 1566.4 L1376.3 1572.3 L1374.0 1574.6 L1377.5 1582.9 L1382.2 1592.3 L1386.9 1602.8 L1392.8 1612.2 L1396.3 1619.3 L1394.0 1622.8 L1397.5 1626.3 L1408.1 1625.2 L1417.5 1621.6 L1416.3 1627.5 L1410.4 1634.6 L1403.4 1641.6 L1396.3 1647.5 L1391.6 1654.6 L1391.6 1656.9 L1388.1 1664.0 L1385.7 1671.0 M1375.2 1566.4 L1378.1 1560.5 L1384.6 1563.5 L1391.6 1566.4 L1401.0 1571.1 L1408.1 1572.3 L1412.8 1571.1 L1417.5 1577.0 L1422.2 1584.0 L1426.9 1587.6 L1431.6 1581.7 L1433.9 1587.6 L1439.8 1591.1 L1438.6 1597.0 L1431.6 1601.7 L1422.2 1606.4 L1410.4 1612.2 L1398.7 1619.3 L1396.3 1619.3 M1395.1 1607.5 L1408.1 1605.2 L1419.8 1602.8 L1422.2 1606.4 M1395.1 1607.5 L1396.3 1619.3 M1419.8 1602.8 L1429.2 1595.8 L1431.6 1589.9 M1408.1 1572.3 L1412.8 1579.3 L1417.5 1586.4 L1426.9 1587.6 M1351.6 1537.0 L1358.7 1533.5 L1370.5 1530.6 L1384.6 1532.3 L1396.9 1532.5 L1401.0 1536.4 L1403.4 1540.0 L1399.8 1545.2 L1392.8 1546.4 L1384.6 1547.6 L1377.5 1549.9 L1371.6 1548.8 L1365.8 1549.9 L1358.7 1548.8 L1352.8 1545.2Z M1377.5 1549.9 L1376.3 1555.8 L1375.2 1566.4 M1377.5 1555.8 L1384.6 1553.5 L1392.8 1546.4 M1378.1 1560.5 L1386.9 1559.3 L1384.6 1553.5 M1386.9 1559.3 L1391.6 1566.4 M1399.8 1545.2 L1403.4 1553.5 L1403.4 1560.5 L1409.2 1567.6 L1408.1 1572.3 M1403.4 1540.0 L1411.0 1542.3 L1413.9 1545.2 L1425.7 1547.6 L1435.1 1545.2 L1443.3 1547.6 L1445.7 1552.3 L1443.3 1560.5 L1445.7 1571.1 L1449.2 1578.2 L1445.1 1584.0 L1433.9 1582.9 L1426.9 1579.3 L1419.8 1577.0 L1415.1 1572.3 L1409.2 1567.6 M1356.3 1523.5 L1361.0 1517.0 L1368.1 1519.4 L1376.3 1517.0 L1384.6 1522.9 L1391.6 1527.6 L1396.9 1532.5 M1410.4 1505.3 L1417.5 1511.2 L1423.3 1513.5 L1419.8 1520.6 L1417.5 1528.8 L1422.2 1535.8 L1424.5 1545.2 L1418.6 1546.4 L1413.9 1541.7 L1412.8 1535.8 L1409.2 1531.1 L1412.8 1525.3 L1406.9 1521.7 L1405.7 1515.9 L1408.1 1510.0Z M1423.3 1513.5 L1430.4 1518.2 L1438.6 1517.0 L1445.7 1524.1 L1455.1 1525.3 L1461.0 1534.7 L1466.8 1537.0 L1472.7 1530.0 L1479.9 1526.4 M1424.5 1545.2 L1425.7 1534.7 L1431.6 1530.0 L1438.6 1527.6 L1445.7 1534.7 L1455.1 1537.0 L1461.0 1534.7 M1443.3 1547.6 L1449.2 1545.2 L1455.1 1541.7 L1464.5 1542.9 L1471.5 1545.2 L1470.4 1551.1 L1479.9 1548.8 M1445.7 1571.1 L1459.8 1567.6 L1466.8 1565.2 L1471.5 1560.5 L1472.7 1552.3 M1544.2 1579.0 L1545.8 1587.2 L1544.2 1600.2 L1540.9 1603.4 M1532.0 1592.9 L1533.6 1603.4 L1538.5 1609.9 L1541.7 1608.3 M1553.9 1592.9 L1550.7 1595.3 L1552.3 1601.0 L1557.2 1603.4 L1559.6 1602.6 M1554.7 1616.5 L1557.2 1623.8 L1561.2 1625.4 M1514.9 1502.5 L1527.9 1496.0 L1537.6 1499.3 L1542.5 1497.6 L1544.2 1491.1 L1553.9 1494.4 L1557.2 1498.5 L1566.9 1497.6 L1573.5 1502.5 L1580.0 1501.7 L1586.5 1498.5 L1592.2 1500.9 M1440.0 1496.8 L1444.9 1494.4 L1443.3 1484.6 L1449.8 1480.6 L1466.0 1475.2 L1470.9 1477.3 L1472.5 1480.6 L1478.2 1483.8 L1485.6 1479.7 L1495.3 1495.2 L1503.5 1494.4 L1514.9 1502.5 M1440.0 1518.8 L1449.8 1523.7 L1457.9 1530.2 L1464.4 1535.1 L1480.7 1536.7 M1464.4 1535.1 L1477.4 1526.9 L1488.8 1526.1 L1496.1 1528.6 M1440.0 1547.3 L1446.5 1553.0 L1456.3 1546.5 L1466.0 1544.8 L1475.0 1549.7 M1456.3 1546.5 L1461.2 1540.0 L1470.9 1543.2 L1479.1 1541.6 M1444.9 1570.9 L1443.3 1561.1 L1446.5 1553.0 M1313.1 1667.5 L1314.7 1673.2 L1317.2 1684.6 L1313.9 1691.1 L1311.5 1699.3 L1313.9 1705.8 L1318.8 1717.2 L1321.2 1726.9 L1325.3 1732.6 M1368.4 1728.6 L1369.3 1724.5 L1375.8 1720.4 L1375.8 1713.9 L1373.3 1710.7 L1375.0 1707.4 L1380.7 1702.5 L1387.2 1697.6 L1389.6 1691.1 L1388.8 1681.4 L1385.5 1676.5 L1384.7 1670.0 L1387.2 1663.5 L1392.0 1657.8 M1311.5 1699.3 L1330.2 1700.1 L1336.7 1702.5 L1348.9 1703.3 M1336.7 1702.5 L1335.1 1713.9 L1333.5 1722.9 M1314.7 1670.0 L1324.5 1670.0 L1328.6 1675.7 L1338.3 1673.2 L1340.0 1683.0 L1344.8 1683.8 M1340.0 1683.0 L1339.2 1696.0 L1343.2 1701.7 M1344.8 1683.8 L1356.2 1686.3 L1357.9 1678.1 L1362.7 1676.5 L1369.3 1679.7 L1372.5 1684.6 M1360.3 1696.8 L1362.7 1693.6 L1370.9 1692.0 L1372.5 1684.6 L1379.0 1685.4 L1388.8 1681.4 M1369.3 1679.7 L1370.9 1687.9 L1375.8 1696.0 L1374.1 1699.3 L1368.9 1701.7 M1362.7 1676.5 L1359.5 1668.4 L1361.1 1658.6 L1370.9 1656.1 L1385.5 1665.9 M1368.4 1707.4 L1373.3 1710.7" fill="none" stroke="#27446c" stroke-width="1" stroke-linejoin="round"/>
<path d="M1054.1 1594.0 L1059.1 1590.8 L1066.4 1591.4 L1073.6 1595.5 L1082.3 1599.1 L1077.2 1599.8 L1070.7 1596.9 L1062.0 1594.0Z M1087.3 1599.8 L1093.9 1599.8 L1098.2 1603.4 L1093.9 1605.6 L1088.1 1604.9Z M1072.2 1603.4 L1077.2 1603.9 L1076.8 1605.3 L1072.4 1605.0Z M1101.8 1603.0 L1105.4 1603.1 L1105.4 1604.7 L1102.0 1604.7Z M1093.8 1704.1 L1091.6 1722.5 L1089.4 1742.1 L1084.6 1763.8 L1082.9 1776.8 L1079.1 1795.2 L1082.4 1795.8 L1079.1 1803.9 L1080.2 1816.9 L1085.1 1824.5 L1091.6 1831.0 L1098.1 1833.8 L1102.5 1831.0 M1080.8 1818.0 L1085.1 1821.3 L1091.1 1825.6 L1093.8 1820.2 L1097.3 1819.7 M1117.1 1816.4 L1120.9 1813.7 L1124.7 1813.1 L1127.4 1815.3 L1124.2 1816.9 L1118.7 1818.0Z M1344.0 1552.3 L1351.1 1553.2 L1350.7 1554.4 L1344.4 1553.7Z M1366.9 1553.5 L1371.6 1551.7 L1371.0 1554.1 L1367.5 1555.2Z M1604.4 1584.7 L1606.8 1583.9 L1605.2 1592.0 L1602.7 1594.5 L1601.9 1589.6Z M1612.5 1537.5 L1619.0 1531.8 L1625.5 1528.6 L1628.8 1530.2 L1623.9 1536.7 L1623.9 1541.6 L1618.2 1544.0 L1615.0 1541.6Z M1494.5 1627.0 L1497.8 1629.5 L1499.4 1635.2 L1496.1 1637.6 L1493.4 1633.5Z M1621.5 1648.0 L1623.9 1648.8 L1624.7 1655.3 L1622.0 1654.5Z M1657.8 1660.2 L1666.2 1662.7 L1672.7 1669.2 L1676.0 1671.6 L1674.4 1674.1 L1680.9 1678.9 L1683.3 1682.2 L1676.0 1679.7 L1671.1 1675.7 L1666.2 1674.9 L1663.0 1678.1 L1657.8 1678.1Z M1683.3 1660.5 L1688.2 1662.7 L1689.0 1665.9 L1684.1 1669.2 L1678.4 1669.2 L1684.1 1667.1 L1686.6 1664.3Z M1693.1 1667.5 L1698.0 1672.4 L1706.9 1674.9 L1714.2 1683.0 M1719.1 1708.2 L1726.4 1713.9 L1725.6 1715.2 L1718.6 1709.4Z M1754.1 1700.9 L1759.8 1697.6 L1760.6 1699.6 L1755.4 1703.3Z M1725.6 1693.6 L1727.7 1694.1 L1728.9 1698.5 L1726.8 1697.6Z M1593.8 1630.9 L1600.3 1623.6 M1412.4 1686.3 L1415.6 1694.4 L1413.2 1704.2 L1409.9 1715.6 L1406.7 1722.9 L1401.8 1725.0 L1397.7 1722.9 L1396.1 1713.9 L1397.7 1705.8 L1399.4 1697.6 L1405.9 1694.4 L1409.9 1689.5Z" fill="none" stroke="#243c5a" stroke-width="1" stroke-linejoin="round"/>
</svg>
<div class="b" style="left:1947px;top:1027px;width:617px;height:1003px;border:2px solid #222a38;border-radius:18px;box-sizing:border-box;"></div>
<div class="b" style="left:2554px;top:1030px;width:9px;height:135px;background:#3a3d48;border-radius:0 14px 0 0;"></div>
<div class="t" style="left:2041.50px;top:1068.40px;font-size:28px;line-height:28px;color:#fff;letter-spacing:0.858px;-webkit-text-stroke-width:0.3px;">Germany</div>
<div class="t" style="left:2450.40px;top:1068.40px;font-size:28px;line-height:28px;color:#94a0b8;letter-spacing:-0.600px;-webkit-text-stroke-width:0.3px;">38.1%</div>
<svg class="ic" style="left:1983px;top:1099px;width:25px;height:19px" viewBox="0 0 25 19"><clipPath id="fcde"><path d="M0 2.2 C4 3.2 8 2.6 12.5 1.6 S21 -0.2 25 1.2 L25 16.6 C21 15.4 17 16.2 12.5 17.2 S4 18.8 0 17.8Z"/></clipPath><g clip-path="url(#fcde)"><rect x="0" y="0.00" width="25" height="6.63" fill="#1a1a1f"/><rect x="0" y="6.33" width="25" height="6.63" fill="#e23b32"/><rect x="0" y="12.67" width="25" height="6.63" fill="#f2c51f"/><rect width="25" height="19" fill="url(#fsh)"/></g></svg>
<div class="b" style="left:2041px;top:1150px;width:489px;height:8px;background:#003d7a;"></div>
<div class="b" style="left:2041px;top:1150px;width:186.3px;height:8px;background:#0a5cb8;"></div>
<div class="t" style="left:2041.50px;top:1196.40px;font-size:28px;line-height:28px;color:#fff;letter-spacing:1.028px;-webkit-text-stroke-width:0.3px;">United States of America</div>
<div class="t" style="left:2462.50px;top:1196.40px;font-size:28px;line-height:28px;color:#94a0b8;letter-spacing:0.417px;-webkit-text-stroke-width:0.3px;">8.5%</div>
<svg class="ic" style="left:1983px;top:1227px;width:25px;height:19px" viewBox="0 0 25 19"><clipPath id="fcus"><path d="M0 2.2 C4 3.2 8 2.6 12.5 1.6 S21 -0.2 25 1.2 L25 16.6 C21 15.4 17 16.2 12.5 17.2 S4 18.8 0 17.8Z"/></clipPath><g clip-path="url(#fcus)"><rect x="0" y="0.00" width="25" height="2.31" fill="#d8434a"/><rect x="0" y="2.11" width="25" height="2.31" fill="#f3f3f5"/><rect x="0" y="4.22" width="25" height="2.31" fill="#d8434a"/><rect x="0" y="6.33" width="25" height="2.31" fill="#f3f3f5"/><rect x="0" y="8.44" width="25" height="2.31" fill="#d8434a"/><rect x="0" y="10.56" width="25" height="2.31" fill="#f3f3f5"/><rect x="0" y="12.67" width="25" height="2.31" fill="#d8434a"/><rect x="0" y="14.78" width="25" height="2.31" fill="#f3f3f5"/><rect x="0" y="16.89" width="25" height="2.31" fill="#d8434a"/><rect x="0" y="0" width="11" height="10" fill="#3b5aa8"/><rect width="25" height="19" fill="url(#fsh)"/></g></svg>
<div class="b" style="left:2041px;top:1278px;width:489px;height:8px;background:#003d7a;"></div>
<div class="b" style="left:2041px;top:1278px;width:41.6px;height:8px;background:#2e8b2e;"></div>
<div class="t" style="left:2041.50px;top:1324.40px;font-size:28px;line-height:28px;color:#fff;letter-spacing:1.130px;-webkit-text-stroke-width:0.3px;">Netherlands</div>
<div class="t" style="left:2465.55px;top:1324.40px;font-size:28px;line-height:28px;color:#94a0b8;letter-spacing:-0.600px;-webkit-text-stroke-width:0.3px;">6.1%</div>
<svg class="ic" style="left:1983px;top:1355px;width:25px;height:19px" viewBox="0 0 25 19"><clipPath id="fcnl"><path d="M0 2.2 C4 3.2 8 2.6 12.5 1.6 S21 -0.2 25 1.2 L25 16.6 C21 15.4 17 16.2 12.5 17.2 S4 18.8 0 17.8Z"/></clipPath><g clip-path="url(#fcnl)"><rect x="0" y="0.00" width="25" height="6.63" fill="#c8323c"/><rect x="0" y="6.33" width="25" height="6.63" fill="#f1f1f3"/><rect x="0" y="12.67" width="25" height="6.63" fill="#2a4b9b"/><rect width="25" height="19" fill="url(#fsh)"/></g></svg>
<div class="b" style="left:2041px;top:1406px;width:489px;height:8px;background:#003d7a;"></div>
<div class="b" style="left:2041px;top:1406px;width:29.8px;height:8px;background:#b38a22;"></div>
<div class="t" style="left:2041.50px;top:1452.40px;font-size:28px;line-height:28px;color:#fff;letter-spacing:0.575px;-webkit-text-stroke-width:0.3px;">Spain</div>
<div class="t" style="left:2462.50px;top:1452.40px;font-size:28px;line-height:28px;color:#94a0b8;letter-spacing:0.417px;-webkit-text-stroke-width:0.3px;">5.6%</div>
<svg class="ic" style="left:1983px;top:1483px;width:25px;height:19px" viewBox="0 0 25 19"><clipPath id="fces"><path d="M0 2.2 C4 3.2 8 2.6 12.5 1.6 S21 -0.2 25 1.2 L25 16.6 C21 15.4 17 16.2 12.5 17.2 S4 18.8 0 17.8Z"/></clipPath><g clip-path="url(#fces)"><rect x="0" y="0.00" width="25" height="5.05" fill="#d43a32"/><rect x="0" y="4.75" width="25" height="5.05" fill="#f2c21c"/><rect x="0" y="9.50" width="25" height="5.05" fill="#f2c21c"/><rect x="0" y="14.25" width="25" height="5.05" fill="#d43a32"/><rect x="5" y="7" width="4" height="5" fill="#b5651d" opacity=".8"/><rect width="25" height="19" fill="url(#fsh)"/></g></svg>
<div class="b" style="left:2041px;top:1534px;width:489px;height:8px;background:#003d7a;"></div>
<div class="b" style="left:2041px;top:1534px;width:27.4px;height:8px;background:#0a5cb8;"></div>
<div class="t" style="left:2041.50px;top:1580.40px;font-size:28px;line-height:28px;color:#fff;letter-spacing:0.470px;-webkit-text-stroke-width:0.3px;">Poland</div>
<div class="t" style="left:2461.50px;top:1580.40px;font-size:28px;line-height:28px;color:#94a0b8;letter-spacing:0.750px;-webkit-text-stroke-width:0.3px;">4.9%</div>
<svg class="ic" style="left:1983px;top:1611px;width:25px;height:19px" viewBox="0 0 25 19"><clipPath id="fcpl"><path d="M0 2.2 C4 3.2 8 2.6 12.5 1.6 S21 -0.2 25 1.2 L25 16.6 C21 15.4 17 16.2 12.5 17.2 S4 18.8 0 17.8Z"/></clipPath><g clip-path="url(#fcpl)"><rect x="0" y="0.00" width="25" height="9.80" fill="#f2f2f4"/><rect x="0" y="9.50" width="25" height="9.80" fill="#d63a3f"/><rect width="25" height="19" fill="url(#fsh)"/></g></svg>
<div class="b" style="left:2041px;top:1662px;width:489px;height:8px;background:#003d7a;"></div>
<div class="b" style="left:2041px;top:1662px;width:24.0px;height:8px;background:#ce93d8;"></div>
<div class="t" style="left:2041.50px;top:1708.40px;font-size:28px;line-height:28px;color:#fff;letter-spacing:1.104px;-webkit-text-stroke-width:0.3px;">United Kingdom</div>
<div class="t" style="left:2462.50px;top:1708.40px;font-size:28px;line-height:28px;color:#94a0b8;letter-spacing:0.417px;-webkit-text-stroke-width:0.3px;">3.5%</div>
<svg class="ic" style="left:1983px;top:1739px;width:25px;height:19px" viewBox="0 0 25 19"><clipPath id="fcgb"><path d="M0 2.2 C4 3.2 8 2.6 12.5 1.6 S21 -0.2 25 1.2 L25 16.6 C21 15.4 17 16.2 12.5 17.2 S4 18.8 0 17.8Z"/></clipPath><g clip-path="url(#fcgb)"><rect width="25" height="19" fill="#26408f"/><path d="M0 0L25 19M25 0L0 19" stroke="#f3f3f5" stroke-width="3.6"/><path d="M0 0L25 19M25 0L0 19" stroke="#d8343c" stroke-width="1.3"/><path d="M12.5 0V19M0 9.5H25" stroke="#f3f3f5" stroke-width="5.4"/><path d="M12.5 0V19M0 9.5H25" stroke="#d8343c" stroke-width="3"/><rect width="25" height="19" fill="url(#fsh)"/></g></svg>
<div class="b" style="left:2041px;top:1790px;width:489px;height:8px;background:#003d7a;"></div>
<div class="b" style="left:2041px;top:1790px;width:17.1px;height:8px;background:#0a5cb8;"></div>
<div class="t" style="left:2041.50px;top:1836.40px;font-size:28px;line-height:28px;color:#fff;letter-spacing:0.690px;-webkit-text-stroke-width:0.3px;">France</div>
<div class="t" style="left:2461.50px;top:1836.40px;font-size:28px;line-height:28px;color:#94a0b8;letter-spacing:0.750px;-webkit-text-stroke-width:0.3px;">2.8%</div>
<svg class="ic" style="left:1983px;top:1867px;width:25px;height:19px" viewBox="0 0 25 19"><clipPath id="fcfr"><path d="M0 2.2 C4 3.2 8 2.6 12.5 1.6 S21 -0.2 25 1.2 L25 16.6 C21 15.4 17 16.2 12.5 17.2 S4 18.8 0 17.8Z"/></clipPath><g clip-path="url(#fcfr)"><rect x="0.00" y="0" width="8.63" height="19" fill="#1f3f9a"/><rect x="8.33" y="0" width="8.63" height="19" fill="#f4f4f6"/><rect x="16.67" y="0" width="8.63" height="19" fill="#e0343c"/><rect width="25" height="19" fill="url(#fsh)"/></g></svg>
<div class="b" style="left:2041px;top:1918px;width:489px;height:8px;background:#003d7a;"></div>
<div class="b" style="left:2041px;top:1918px;width:13.7px;height:8px;background:#0a5cb8;"></div>
<div class="t" style="left:2041.50px;top:1964.40px;font-size:28px;line-height:28px;color:#fff;letter-spacing:1.050px;-webkit-text-stroke-width:0.3px;">Sweden</div>
<div class="t" style="left:2461.50px;top:1964.40px;font-size:28px;line-height:28px;color:#94a0b8;letter-spacing:0.750px;-webkit-text-stroke-width:0.3px;">2.8%</div>
<svg class="ic" style="left:1983px;top:1995px;width:25px;height:19px" viewBox="0 0 25 19"><clipPath id="fcse"><path d="M0 2.2 C4 3.2 8 2.6 12.5 1.6 S21 -0.2 25 1.2 L25 16.6 C21 15.4 17 16.2 12.5 17.2 S4 18.8 0 17.8Z"/></clipPath><g clip-path="url(#fcse)"><rect width="25" height="19" fill="#2a64a8"/><rect x="7" y="0" width="3.6" height="19" fill="#f2c51f"/><rect x="0" y="7.6" width="25" height="3.6" fill="#f2c51f"/><rect width="25" height="19" fill="url(#fsh)"/></g></svg>
<div class="b" style="left:2650px;top:1884px;width:100px;height:104px;background:#3578e8;border-radius:15px;"></div>
<svg class="ic" style="left:2677px;top:1914.3px;width:38px;height:40.5px" viewBox="0 0 24 24" preserveAspectRatio="none"><defs><linearGradient id="hg" x1="0" x2="0" y1="0" y2="1"><stop offset=".12" stop-color="#f4f4f5"/><stop offset=".4" stop-color="#dcdcde"/><stop offset="1" stop-color="#d6d6d8"/></linearGradient></defs><path fill="url(#hg)" d="m12 21.35-1.45-1.32C5.4 15.36 2 12.28 2 8.5 2 5.42 4.42 3 7.5 3c1.74 0 3.41.81 4.5 2.09C13.09 3.81 14.76 3 16.5 3 19.58 3 22 5.42 22 8.5c0 3.78-3.4 6.86-8.55 11.54L12 21.35z"/></svg>
<div class="b" style="left:0px;top:0px;width:480px;height:2048px;background:#0c1017;border-right:2px solid #222a38;box-sizing:border-box;"></div>
<div class="b" style="left:0px;top:94px;width:478px;height:2px;background:#222a38;"></div>
<div class="b" style="left:0px;top:226px;width:478px;height:2px;background:#222a38;"></div>
<div class="b" style="left:0px;top:1808px;width:478px;height:2px;background:#222a38;"></div>
<div class="b" style="left:0px;top:1950px;width:478px;height:2px;background:#222a38;"></div>
<svg class="ic" style="left:20px;top:20px;width:100px;height:60px" viewBox="20 20 100 60"><g fill="none" stroke-width="4.6" stroke-linejoin="round"><path d="M33.2 38.2 L40.4 52.4 Q42 55.6 43.7 52.4 L51.2 38.6" stroke="#2f6fe4"/><path d="M51.2 38.6 L58.8 52.6 Q60.8 56 62.8 52.6 L68.6 41.6 Q70.6 38 72.6 41.8 L78.9 55.6" stroke="#b9c9ee"/></g></svg>
<div class="t" style="left:97.60px;top:27.94px;font-size:40px;line-height:40px;color:#fff;font-weight:700;letter-spacing:1.086px;">Vibesmonitor</div>
<div class="b" style="left:16px;top:418px;width:446px;height:73px;background:#0f5ab2;border-radius:14px;"></div>
<svg class="ic" style="left:48px;top:129px;width:48px;height:48px;fill:#fff;" viewBox="0 0 24 24"><path d="M3 13h8V3H3v10zm0 8h8v-6H3v6zm10 0h8V11h-8v10zm0-18v6h8V3h-8z"/></svg>
<div class="t" style="left:160.90px;top:139.30px;font-size:28px;line-height:28px;color:#fff;letter-spacing:0.700px;-webkit-text-stroke-width:0.3px;">Dashboard</div>
<svg class="ic" style="left:48px;top:276px;width:48px;height:48px;fill:#fff;" viewBox="0 0 24 24"><path d="M21 8c-1.45 0-2.26 1.44-1.93 2.51l-3.55 3.56c-.3-.09-.74-.09-1.04 0l-2.55-2.55C12.27 10.45 11.46 9 10 9c-1.45 0-2.27 1.44-1.93 2.52l-4.56 4.55C2.44 15.74 1 16.55 1 18c0 1.1.9 2 2 2 1.45 0 2.26-1.44 1.93-2.51l4.55-4.56c.3.09.74.09 1.04 0l2.55 2.55C12.73 16.55 13.54 18 15 18c1.45 0 2.27-1.44 1.93-2.52l3.56-3.55c1.07.33 2.51-.48 2.51-1.93 0-1.1-.9-2-2-2z"/><path d="m15 9 .94-2.07L18 6l-2.06-.93L15 3l-.92 2.07L12 6l2.08.93zM3.5 11 4 9l2-.5L4 8l-.5-2L3 8l-2 .5L3 9z"/></svg>
<div class="t" style="left:160.90px;top:287.00px;font-size:28px;line-height:28px;color:#fff;letter-spacing:0.800px;-webkit-text-stroke-width:0.3px;">Overview</div>
<svg class="ic" style="left:48px;top:354px;width:48px;height:48px;fill:#fff;" viewBox="0 0 24 24"><path d="M12 2C6.48 2 2 6.48 2 12s4.48 10 10 10 10-4.48 10-10S17.52 2 12 2zm-1 17.93c-3.95-.49-7-3.85-7-7.93 0-.62.08-1.21.21-1.79L9 15v1c0 1.1.9 2 2 2v1.93zm6.9-2.54c-.26-.81-1-1.39-1.9-1.39h-1v-3c0-.55-.45-1-1-1H8v-2h2c.55 0 1-.45 1-1V7h2c1.1 0 2-.9 2-2v-.41c2.93 1.19 5 4.06 5 7.41 0 2.08-.8 3.97-2.1 5.39z"/></svg>
<div class="t" style="left:160.90px;top:364.10px;font-size:28px;line-height:28px;color:#fff;letter-spacing:0.317px;-webkit-text-stroke-width:0.3px;">Live</div>
<svg class="ic" style="left:48px;top:430px;width:48px;height:48px;fill:#fff;" viewBox="0 0 24 24"><path d="M4 9h4v11H4zM16 13h4v7h-4zM10 4h4v16h-4z"/></svg>
<div class="t" style="left:160.90px;top:440.20px;font-size:28px;line-height:28px;color:#fff;letter-spacing:0.938px;-webkit-text-stroke-width:0.3px;">Analytics</div>
<svg class="ic" style="left:48px;top:507px;width:48px;height:48px;fill:#fff;" viewBox="0 0 24 24"><path d="M20 8h-2.81a5.985 5.985 0 0 0-1.82-1.96L17 4.41 15.59 3l-2.17 2.17C12.96 5.06 12.49 5 12 5c-.49 0-.96.06-1.41.17L8.41 3 7 4.41l1.62 1.63C7.88 6.55 7.26 7.22 6.81 8H4v2h2.09c-.05.33-.09.66-.09 1v1H4v2h2v1c0 .34.04.67.09 1H4v2h2.81c1.04 1.79 2.97 3 5.19 3s4.15-1.21 5.19-3H20v-2h-2.09c.05-.33.09-.66.09-1v-1h2v-2h-2v-1c0-.34-.04-.67-.09-1H20V8zm-6 8h-4v-2h4v2zm0-4h-4v-2h4v2z"/></svg>
<div class="t" style="left:160.90px;top:517.50px;font-size:28px;line-height:28px;color:#fff;letter-spacing:0.490px;-webkit-text-stroke-width:0.3px;">Errors</div>
<svg class="ic" style="left:48px;top:584px;width:48px;height:48px;fill:#fff;" viewBox="0 0 24 24"><path d="m22 9.24-7.19-.62L12 2 9.19 8.63 2 9.24l5.46 4.73L5.82 21 12 17.27 18.18 21l-1.63-7.03L22 9.24zM12 15.4V6.1l1.71 4.04 4.38.38-3.32 2.88 1 4.28L12 15.4z"/></svg>
<div class="t" style="left:160.90px;top:594.20px;font-size:28px;line-height:28px;color:#fff;letter-spacing:0.679px;-webkit-text-stroke-width:0.3px;">Feedback</div>
<svg class="ic" style="left:48px;top:661px;width:48px;height:48px;fill:#fff;" viewBox="0 0 24 24"><path d="M19.14 12.94c.04-.3.06-.61.06-.94 0-.32-.02-.64-.07-.94l2.03-1.58a.49.49 0 0 0 .12-.61l-1.92-3.32a.488.488 0 0 0-.59-.22l-2.39.96c-.5-.38-1.03-.7-1.62-.94l-.36-2.54a.484.484 0 0 0-.48-.41h-3.84c-.24 0-.43.17-.47.41l-.36 2.54c-.59.24-1.13.57-1.62.94l-2.39-.96c-.22-.08-.47 0-.59.22L2.74 8.87c-.12.21-.08.47.12.61l2.03 1.58c-.05.3-.09.63-.09.94s.02.64.07.94l-2.03 1.58a.49.49 0 0 0-.12.61l1.92 3.32c.12.22.37.29.59.22l2.39-.96c.5.38 1.03.7 1.62.94l.36 2.54c.05.24.24.41.48.41h3.84c.24 0 .44-.17.47-.41l.36-2.54c.59-.24 1.13-.56 1.62-.94l2.39.96c.22.08.47 0 .59-.22l1.92-3.32c.12-.22.07-.47-.12-.61l-2.01-1.58zM12 15.6c-1.98 0-3.6-1.62-3.6-3.6s1.62-3.6 3.6-3.6 3.6 1.62 3.6 3.6-1.62 3.6-3.6 3.6z"/></svg>
<div class="t" style="left:160.90px;top:671.20px;font-size:28px;line-height:28px;color:#fff;letter-spacing:0.679px;-webkit-text-stroke-width:0.3px;">Settings</div>
<svg class="ic" style="left:48px;top:1503px;width:48px;height:48px;fill:#fff;" viewBox="0 0 24 24"><path d="M12 12c2.21 0 4-1.79 4-4s-1.79-4-4-4-4 1.79-4 4 1.79 4 4 4zm0 2c-2.67 0-8 1.34-8 4v2h16v-2c0-2.66-5.33-4-8-4z"/></svg>
<div class="t" style="left:160.90px;top:1513.20px;font-size:28px;line-height:28px;color:#fff;letter-spacing:0.650px;-webkit-text-stroke-width:0.3px;">Profile</div>
<svg class="ic" style="left:48px;top:1579px;width:48px;height:48px;fill:#fff;" viewBox="0 0 24 24"><path d="M11.07 12.85c.77-1.39 2.25-2.21 3.11-3.44.91-1.29.4-3.7-2.18-3.7-1.69 0-2.52 1.28-2.87 2.34L6.54 6.96C7.25 4.83 9.18 3 11.99 3c2.35 0 3.96 1.07 4.78 2.41.7 1.15 1.11 3.3.03 4.9-1.2 1.77-2.35 2.31-2.97 3.45-.25.46-.35.76-.35 2.24h-2.89c-.01-.78-.13-2.05.48-3.15zM14 20c0 1.1-.9 2-2 2s-2-.9-2-2 .9-2 2-2 2 .9 2 2z"/></svg>
<div class="t" style="left:160.90px;top:1589.10px;font-size:28px;line-height:28px;color:#fff;letter-spacing:0.670px;-webkit-text-stroke-width:0.3px;">Help Center</div>
<svg class="ic" style="left:48px;top:1655px;width:48px;height:48px;fill:#fff;" viewBox="0 0 24 24"><path d="M12 2C6.48 2 2 6.48 2 12s4.48 10 10 10h5v-2h-5c-4.34 0-8-3.66-8-8s3.66-8 8-8 8 3.66 8 8v1.43c0 .79-.71 1.57-1.5 1.57s-1.5-.78-1.5-1.57V12c0-2.76-2.24-5-5-5s-5 2.24-5 5 2.24 5 5 5c1.38 0 2.64-.56 3.54-1.47.65.89 1.77 1.47 2.96 1.47 1.97 0 3.5-1.6 3.5-3.57V12c0-5.52-4.48-10-10-10zm0 13c-1.66 0-3-1.34-3-3s1.34-3 3-3 3 1.34 3 3-1.34 3-3 3z"/></svg>
<div class="t" style="left:160.90px;top:1665.70px;font-size:28px;line-height:28px;color:#fff;letter-spacing:1.062px;-webkit-text-stroke-width:0.3px;">About</div>
<svg class="ic" style="left:48px;top:1733px;width:48px;height:48px;fill:#fff;" viewBox="0 0 24 24"><path d="M5 5h6c.55 0 1-.45 1-1s-.45-1-1-1H5c-1.1 0-2 .9-2 2v14c0 1.1.9 2 2 2h6c.55 0 1-.45 1-1s-.45-1-1-1H5V5z"/><path d="M20.650 11.650l-2.790-2.790c-.32-.32-.86-.1-.86.35V11h-7c-.55 0-1 .45-1 1s.45 1 1 1h7v1.790c0 .45.54.67.85.35l2.790-2.790c.2-.19.2-.51.010-.7z"/></svg>
<div class="t" style="left:160.90px;top:1743.50px;font-size:28px;line-height:28px;color:#fff;letter-spacing:1.050px;-webkit-text-stroke-width:0.3px;">Logout</div>
<svg class="ic" style="left:390px;top:1583.7px;width:40px;height:40px;fill:#27334a;" viewBox="0 0 24 24"><path d="M19 19H5V5h7V3H5a2 2 0 0 0-2 2v14a2 2 0 0 0 2 2h14c1.1 0 2-.9 2-2v-7h-2v7zM14 3v2h3.59l-9.83 9.83 1.41 1.41L19 6.41V10h2V3h-7z"/></svg>
<svg class="ic" style="left:390px;top:1660.3px;width:40px;height:40px;fill:#27334a;" viewBox="0 0 24 24"><path d="M19 19H5V5h7V3H5a2 2 0 0 0-2 2v14a2 2 0 0 0 2 2h14c1.1 0 2-.9 2-2v-7h-2v7zM14 3v2h3.59l-9.83 9.83 1.41 1.41L19 6.41V10h2V3h-7z"/></svg>
<div class="b" style="left:49px;top:1239px;width:387px;height:239px;background:linear-gradient(45deg,#0b7bf2 8%,#5a4fd0 48%,#9c27b0 82%);border-radius:18px;border:2px solid rgba(60,70,140,.55);box-sizing:border-box;"></div>
<div class="t" style="left:82.70px;top:1280.70px;font-size:28px;line-height:28px;color:#fff;font-weight:700;">Unlock the full</div>
<div class="t" style="left:82.70px;top:1322.50px;font-size:28px;line-height:28px;color:#fff;font-weight:700;letter-spacing:-0.031px;">potential</div>
<svg class="ic" style="left:362px;top:1272.3px;width:40px;height:40px;fill:#fff;" viewBox="0 0 24 24"><path d="M9.19 6.35c-2.04 2.29-3.44 5.58-3.57 5.89L2 10.69l4.05-4.05c.47-.47 1.15-.68 1.81-.55l1.33.26zM11.17 17s3.74-1.55 5.89-3.7c5.4-5.4 4.5-9.62 4.21-10.57-.95-.3-5.17-1.19-10.57 4.21C8.55 9.09 7 12.83 7 12.83L11.17 17zm6.48-2.19c-2.29 2.04-5.58 3.44-5.89 3.57L13.31 22l4.05-4.05c.47-.47.68-1.15.55-1.81l-.26-1.33zM9 18c0 .83-.34 1.58-.88 2.12C6.94 21.3 2 22 2 22s.7-4.94 1.88-6.12A2.996 2.996 0 0 1 9 18zm4-9c0-1.1.9-2 2-2s2 .9 2 2-.9 2-2 2-2-.9-2-2z"/></svg>
<div class="b" style="left:82px;top:1366px;width:320px;height:62px;background:#ce93d8;border-radius:14px;box-shadow:0 4px 6px rgba(30,10,60,.45);"></div>
<div class="t" style="left:156.20px;top:1384.29px;font-size:26px;line-height:26px;color:#0b0e14;font-weight:700;letter-spacing:0.365px;">Upgrade Now</div>
<div class="b" style="left:32px;top:1845px;width:72px;height:72px;border-radius:50%;overflow:hidden;background:#15131a;"><svg width="72" height="72" viewBox="0 0 72 72"><defs><radialGradient id="avb" cx=".5" cy=".45" r=".62"><stop offset="0" stop-color="#1f1418"/><stop offset=".7" stop-color="#181015"/><stop offset="1" stop-color="#110e15"/></radialGradient><filter id="avf" x="-10%" y="-10%" width="120%" height="120%"><feGaussianBlur stdDeviation=".8"/></filter></defs><rect width="72" height="72" fill="url(#avb)"/><g filter="url(#avf)"><path d="M8 56c6-4 12-6 17-7l6 10 6 13H6zM64 58c-5-4-9-6-13-7l-5 10-3 11h22z" fill="#18161d"/><path d="M16.500 49.500l8.500-1 1.500 9-8.500 1zM61 52.500l7-2-3 5-3 1z" fill="#f4f4f6"/><path d="M21 36c-2-10 1-19 9-23 8-4 20-4 26 1 5 4 7 12 6 20l-3 6-3-14-9-6-14 1-7 7z" fill="#4d4630"/><path d="M36 12c6-3 14-1 16 4l-4 10-10 1z" fill="#3d2226"/><path d="M24.500 30c1-7 5-12 11-12.500 3 0 5 4 8 4 4 0 5-3.500 8-3 4 1 5.500 7 5.500 13 0 7-1 14-4 20l-5 8-4 12.500-9 .5-3-11-5-9c-2.500-6-3.500-14-2.500-22z" fill="#e9bc92"/><path d="M19 28c2-2 5-1 5.500 2l1 9c-3.500-1-6.500-5-6.500-11z" fill="#e9bc92"/><path d="M27 37c1 6 3 14 3 22l-3 .5c-2-7-2-16 0-22.500z" fill="#e4e1e6" opacity=".85"/><path d="M41 31l1 13-3 10 2 8 6-8 5-14-1-9z" fill="#c99868" opacity=".7"/><path d="M33 26l10 1 9-1-1 3-8 1-9-1z" fill="#5a4428" opacity=".8"/><ellipse cx="38" cy="30" rx="3" ry="2.700" fill="#2a1416"/><ellipse cx="48.500" cy="30.500" rx="2.800" ry="2.500" fill="#2a1416"/><path d="M43.500 29l1 9-1.500 2z" fill="#6a3a30"/><path d="M40 44c2-1 5-1 7 0l-1 4-3 8-2-6z" fill="#6b5535" opacity=".85"/><circle cx="40" cy="39" r=".8" fill="#3a2020"/><circle cx="45" cy="39.500" r=".8" fill="#3a2020"/><path d="M36 63l3-3 5 1 3 2-4 5-4-1z" fill="#c9a23a" opacity=".75"/></g></svg>
</div>
<div class="t" style="left:153.50px;top:1844.90px;font-size:28px;line-height:28px;color:#fff;letter-spacing:0.467px;-webkit-text-stroke-width:0.5px;">Vlad</div>
<div class="t" style="left:153.50px;top:1885.68px;font-size:24px;line-height:24px;color:#94a0b8;letter-spacing:0.492px;-webkit-text-stroke-width:0.3px;">vlad@mail.com</div>
<svg class="ic" style="left:215px;top:1976.5px;width:48px;height:48px;fill:#fff;" viewBox="0 0 24 24"><path d="M12 3a9 9 0 1 0 9 9c0-.46-.04-.92-.1-1.36a5.389 5.389 0 0 1-4.4 2.26 5.403 5.403 0 0 1-3.14-9.8c-.44-.06-.9-.1-1.36-.1z"/></svg>
</body></html>
